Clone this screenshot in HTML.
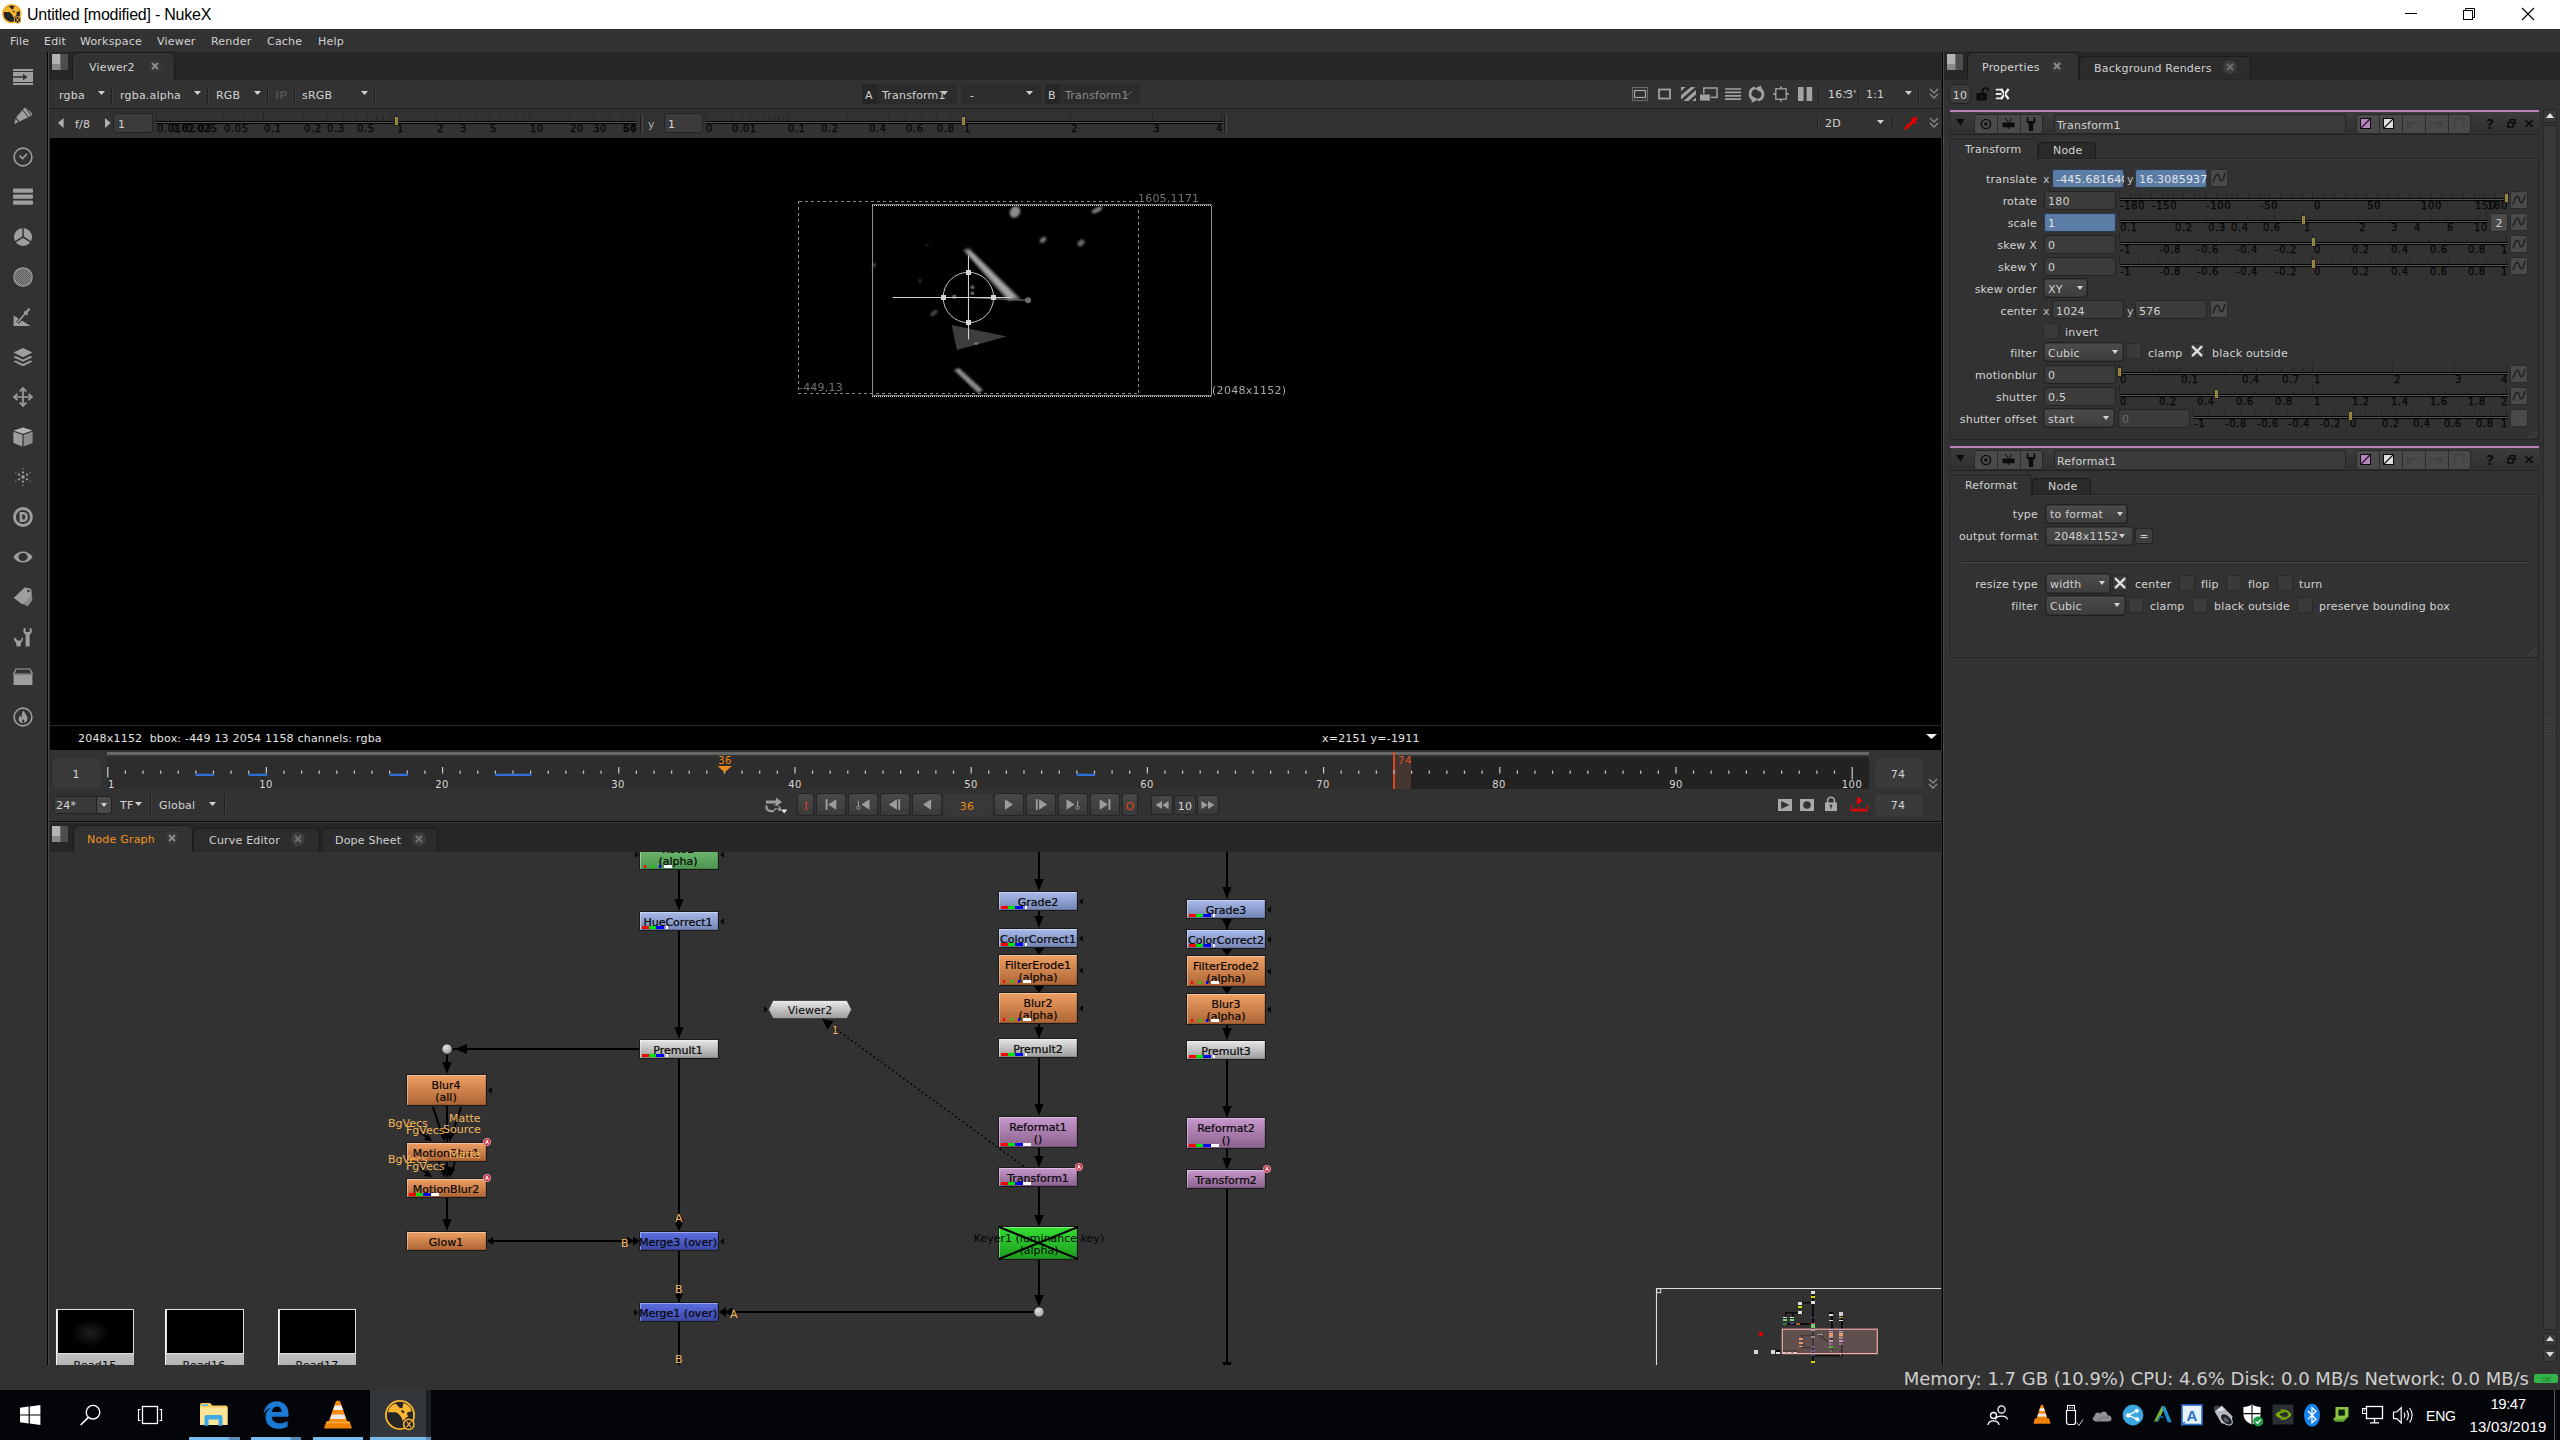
<!DOCTYPE html>
<html><head><meta charset="utf-8"><title>Untitled [modified] - NukeX</title>
<style>
html,body{margin:0;padding:0;background:#323232;overflow:hidden}
#app{position:relative;width:2560px;height:1440px;overflow:hidden;background:#323232;font-family:'DejaVu Sans','Liberation Sans',sans-serif}
#app div,#app span,#app svg{position:absolute}
#app svg{overflow:visible}
.t{font-family:'DejaVu Sans','Liberation Sans',sans-serif;line-height:30px;white-space:pre}
.w{font-family:'Liberation Sans',sans-serif;line-height:30px;white-space:pre}
</style></head><body><div id="app">
<div style="left:0px;top:0px;width:2560px;height:29px;background:#ffffff;"></div>
<svg style="left:2.2px;top:4.25px;" width="19.6" height="19.6" viewBox="0 0 19.6 19.6"><circle cx="9.8" cy="9.8" r="9.02" fill="#262626" stroke="#fcb731" stroke-width="1.57"/><path d="M1.86,7.94 A7.74,7.74 0 0 1 6.86,2.21 C8.04,2.74 8.43,4.70 9.60,5.00 C10.58,5.39 11.27,5.49 11.47,4.90 L12.05,1.96 A7.74,7.74 0 0 1 17.54,7.35 L14.60,7.99 Q13.92,9.31 14.99,10.78 L11.27,13.72 Q11.47,11.96 8.97,9.21 Q8.23,8.23 7.15,7.94 Z" fill="#fcb731"/><ellipse cx="11.66" cy="7.55" rx="1.27" ry="0.73" transform="rotate(40 11.66 7.55)" fill="#262626"/><circle cx="15.53" cy="15.88" r="3.36" fill="#262626" stroke="#fcb731" stroke-width="0.99"/><path d="M14.16,14.04 L16.91,17.71 M16.91,14.04 L14.16,17.71" stroke="#fcb731" stroke-width="0.90" fill="none"/></svg>
<span class="w" style="top:0px;font-size:16px;color:#000;letter-spacing:-0.23px;left:27px;">Untitled [modified] - NukeX</span>
<svg style="left:2400px;top:0px;" width="160" height="29" viewBox="0 0 160 29"><path d="M5,13.5 H17" stroke="#000" stroke-width="1" fill="none"/><path d="M65.5,10.5 V8.5 H74.5 V17.5 H72.5" stroke="#000" stroke-width="1" fill="none"/><rect x="63.5" y="10.5" width="9" height="9" stroke="#000" stroke-width="1" fill="none"/><path d="M122,8 L134,20 M134,8 L122,20" stroke="#000" stroke-width="1.1" fill="none"/></svg>
<div style="left:0px;top:29px;width:2560px;height:22px;background:#323232;"></div>
<div style="left:0px;top:29px;width:2560px;height:1px;background:#2b2b2b;"></div>
<span class="t" style="top:27px;font-size:11px;color:#d2d2d2;letter-spacing:0.2px;left:10px;">File</span>
<span class="t" style="top:27px;font-size:11px;color:#d2d2d2;letter-spacing:0.2px;left:44px;">Edit</span>
<span class="t" style="top:27px;font-size:11px;color:#d2d2d2;letter-spacing:0.2px;left:80px;">Workspace</span>
<span class="t" style="top:27px;font-size:11px;color:#d2d2d2;letter-spacing:0.2px;left:157px;">Viewer</span>
<span class="t" style="top:27px;font-size:11px;color:#d2d2d2;letter-spacing:0.2px;left:211px;">Render</span>
<span class="t" style="top:27px;font-size:11px;color:#d2d2d2;letter-spacing:0.2px;left:267px;">Cache</span>
<span class="t" style="top:27px;font-size:11px;color:#d2d2d2;letter-spacing:0.2px;left:318px;">Help</span>
<div style="left:0px;top:51px;width:47px;height:1314px;background:#323232;"></div>
<div style="left:47px;top:52px;width:1px;height:1313px;background:#000;"></div>
<div style="left:48px;top:52px;width:1px;height:1313px;background:#484848;"></div>
<div style="left:49px;top:52px;width:1px;height:1313px;background:#323232;"></div>
<div style="left:0px;top:50px;width:2560px;height:1px;background:#353535;"></div>
<div style="left:0px;top:51px;width:2560px;height:1px;background:#2e2e2e;"></div>
<svg style="left:13px;top:67px;" width="20" height="20" viewBox="0 0 20 20"><rect x="0" y="2" width="20" height="2" fill="#9e9e9e"/><rect x="0" y="5" width="20" height="10" fill="#9e9e9e"/><rect x="0" y="16" width="20" height="2" fill="#9e9e9e"/><path d="M0,9.2 H10 V6.8 L14.6,10 L10,13.2 V10.8 H0 Z" fill="#323232"/></svg>
<svg style="left:13px;top:107px;" width="20" height="20" viewBox="0 0 20 20"><path d="M11.5,0.8 C15,1.6 18.2,4.6 19.4,8.2 L6.4,14.4 L3.2,10.2 Z" fill="#9e9e9e"/><path d="M2.6,11.4 L5.4,15 L1.2,17.2 Z" fill="#9e9e9e"/><path d="M9.4,2.6 L15.6,10.2 M13.4,1.4 L18.2,8.6" stroke="#323232" stroke-width="1"/></svg>
<svg style="left:13px;top:147px;" width="20" height="20" viewBox="0 0 20 20"><circle cx="10" cy="10" r="8.9" stroke="#9e9e9e" stroke-width="1.6" fill="none"/><path d="M6.6,8.6 L9.6,11.6 L14,6.8" stroke="#9e9e9e" stroke-width="1.6" fill="none"/></svg>
<svg style="left:13px;top:187px;" width="20" height="20" viewBox="0 0 20 20"><rect x="0" y="1.6" width="20" height="4.2" rx="1" fill="#9e9e9e"/><rect x="0" y="7.6" width="20" height="4.2" rx="1" fill="#9e9e9e"/><rect x="0" y="13.6" width="20" height="4.2" rx="1" fill="#9e9e9e"/></svg>
<svg style="left:13px;top:227px;" width="20" height="20" viewBox="0 0 20 20"><circle cx="10" cy="10" r="9" fill="#9e9e9e"/><path d="M10,0 V10 L1.4,15.4 M10,10 L18.6,15.4" stroke="#323232" stroke-width="1.5" fill="none"/></svg>
<svg style="left:13px;top:267px;" width="20" height="20" viewBox="0 0 20 20"><defs><pattern id="dots" width="2" height="2" patternUnits="userSpaceOnUse"><rect width="2" height="2" fill="#8a8a8a"/><rect width="1" height="1" fill="#5c5c5c"/><rect x="1" y="1" width="1" height="1" fill="#5c5c5c"/></pattern></defs><circle cx="10" cy="10" r="9.2" fill="url(#dots)" stroke="#9e9e9e" stroke-width="1.2"/></svg>
<svg style="left:13px;top:307px;" width="20" height="20" viewBox="0 0 20 20"><path d="M0.6,8.6 V19 H17.6 Z" fill="#9e9e9e"/><path d="M4.4,15.8 L13,5.6" stroke="#323232" stroke-width="3.4"/><path d="M4.6,15.6 L12.6,6" stroke="#9e9e9e" stroke-width="1.5"/><path d="M11.2,4.6 L14.6,7.6 M12.6,6.2 L16.4,1.6" stroke="#9e9e9e" stroke-width="2.2"/></svg>
<svg style="left:13px;top:347px;" width="20" height="20" viewBox="0 0 20 20"><path d="M10,1 L19.6,5.6 L10,10.2 L0.4,5.6 Z" fill="#9e9e9e"/><path d="M2.6,9 L10,12.6 L17.4,9 L19.6,10.2 L10,14.8 L0.4,10.2 Z" fill="#9e9e9e"/><path d="M2.6,13.4 L10,17 L17.4,13.4 L19.6,14.6 L10,19.2 L0.4,14.6 Z" fill="#9e9e9e"/></svg>
<svg style="left:13px;top:387px;" width="20" height="20" viewBox="0 0 20 20"><path d="M10,1.2 V18.8 M1.2,10 H18.8" stroke="#9e9e9e" stroke-width="1.7" fill="none"/><path d="M6.8,4.6 L10,1 L13.2,4.6 M6.8,15.4 L10,19 L13.2,15.4 M4.6,6.8 L1,10 L4.6,13.2 M15.4,6.8 L19,10 L15.4,13.2" stroke="#9e9e9e" stroke-width="1.7" fill="none" stroke-linejoin="miter"/></svg>
<svg style="left:13px;top:427px;" width="20" height="20" viewBox="0 0 20 20"><path d="M10,0.6 L19.6,3.6 L10,6.8 L0.4,3.6 Z" fill="#b4b4b4"/><path d="M0.4,4.8 L9.4,7.8 V19.6 L0.4,16 Z" fill="#9e9e9e"/><path d="M19.6,4.8 L10.6,7.8 V19.6 L19.6,16 Z" fill="#8c8c8c"/></svg>
<svg style="left:13px;top:467px;" width="20" height="20" viewBox="0 0 20 20"><circle cx="10" cy="10" r="1.8" fill="#9e9e9e"/><g fill="#9e9e9e"><circle cx="10" cy="5.4" r="1.1"/><circle cx="10" cy="14.6" r="1.1"/><circle cx="6" cy="7.7" r="1.1"/><circle cx="14" cy="7.7" r="1.1"/><circle cx="6" cy="12.3" r="1.1"/><circle cx="14" cy="12.3" r="1.1"/></g><g fill="#7a7a7a"><circle cx="10" cy="1.6" r="0.8"/><circle cx="10" cy="18.4" r="0.8"/><circle cx="2.8" cy="5.8" r="0.8"/><circle cx="17.2" cy="5.8" r="0.8"/><circle cx="2.8" cy="14.2" r="0.8"/><circle cx="17.2" cy="14.2" r="0.8"/></g></svg>
<svg style="left:13px;top:507px;" width="20" height="20" viewBox="0 0 20 20"><circle cx="10" cy="10" r="8.5" stroke="#9e9e9e" stroke-width="2.8" fill="none"/><path d="M6.6,5 H10.4 C16.4,5 16.4,15 10.4,15 H6.6 Z M9.2,7.4 V12.6 H10.4 C13,12.6 13,7.4 10.4,7.4 Z" fill="#9e9e9e" fill-rule="evenodd"/></svg>
<svg style="left:13px;top:547px;" width="20" height="20" viewBox="0 0 20 20"><path d="M0.4,10 C5,2.6 15,2.6 19.6,10 C15,17.4 5,17.4 0.4,10 Z" fill="#9e9e9e"/><ellipse cx="10" cy="10" rx="4.6" ry="4" fill="#323232"/></svg>
<svg style="left:13px;top:587px;" width="20" height="20" viewBox="0 0 20 20"><path d="M13.6,1.4 L18.4,2.2 L19.4,13 L14.6,19.6 L5.4,14 Z" fill="#8a8a8a"/><path d="M11.6,0.6 L17.4,1.6 L18,8 L9.6,17.6 L0.6,11 Z" fill="#9e9e9e"/><circle cx="15.4" cy="4" r="1.3" fill="#323232"/></svg>
<svg style="left:13px;top:627px;" width="20" height="20" viewBox="0 0 20 20"><path d="M11,1 C9.6,3.6 10.4,6.4 12.6,7.8 V19.4 H16.6 V7.8 C18.8,6.4 19.6,3.6 18.2,1 L16.6,1.2 V5 H12.6 V1.2 Z" fill="#9e9e9e"/><path d="M1,10.6 C0.4,12.6 1.4,14.6 3,15.4 L3.6,19.4 H7.4 L8,15.4 C9.6,14.6 10.4,12.6 9.8,10.6 L8.4,11 V13.4 H4.6 L2.4,11 Z" fill="#9e9e9e"/></svg>
<svg style="left:13px;top:667px;" width="20" height="20" viewBox="0 0 20 20"><path d="M3,2 H17 L19.4,7 H0.6 Z" fill="none" stroke="#9e9e9e" stroke-width="1.2"/><rect x="0.6" y="7.6" width="18.8" height="10.4" fill="#9e9e9e"/></svg>
<svg style="left:13px;top:707px;" width="20" height="20" viewBox="0 0 20 20"><circle cx="10" cy="10" r="8.9" stroke="#9e9e9e" stroke-width="1.6" fill="none"/><path d="M10.4,3.4 C12,6 14.4,8.4 14.4,11.6 C14.4,14.4 12.6,16.2 10,16.2 C7.4,16.2 5.6,14.4 5.6,12 C5.6,10.4 6.4,9.2 7.4,8.2 C7.4,9.6 8,10.4 8.8,10.8 C8.4,8.2 9,5.4 10.4,3.4 Z" fill="#9e9e9e"/><path d="M10,16 C8.6,15 8.8,13.2 10.2,12 C10.6,13 11.6,13.6 11.4,15 Z" fill="#323232"/></svg>
<div style="left:49px;top:52px;width:1892px;height:28px;background:#262626;"></div>
<div style="left:52px;top:54px;width:16px;height:16px;background:#4e4e4e;"></div>
<div style="left:52px;top:54px;width:8px;height:10px;background:#b2b2b2;"></div>
<div style="left:52px;top:64px;width:8px;height:6px;background:#888888;"></div>
<div style="left:60px;top:54px;width:1px;height:16px;background:#6e6e6e;"></div>
<div style="left:72px;top:52px;width:103px;height:28px;background:#323232;border-radius:5px 5px 0 0;box-shadow:inset 1px 1px 0 #1c1c1c, inset -1px 0 0 #1c1c1c;"></div>
<span class="t" style="top:53px;font-size:11px;color:#d2d2d2;letter-spacing:0.2px;left:89px;">Viewer2</span>
<svg style="left:147px;top:58px;" width="16" height="16" viewBox="0 0 16 16"><circle cx="8" cy="8" r="7" fill="#383838"/><path d="M5,5 L11,11 M11,5 L5,11" stroke="#8a8a8a" stroke-width="2" fill="none"/></svg>
<div style="left:50px;top:80px;width:1891px;height:58px;background:#323232;"></div>
<div style="left:50px;top:108px;width:1891px;height:1px;background:#1e1e1e;"></div>
<span class="t" style="top:81px;font-size:11px;color:#d2d2d2;letter-spacing:0.2px;left:59px;">rgba</span>
<svg style="left:98px;top:91px;" width="7" height="4" viewBox="0 0 7 4"><path d="M0,0 H7 L3.5,4 Z" fill="#d2d2d2"/></svg>
<div style="left:111px;top:87px;width:1px;height:15px;background:#1e1e1e;"></div>
<div style="left:112px;top:87px;width:1px;height:15px;background:#3e3e3e;"></div>
<span class="t" style="top:81px;font-size:11px;color:#d2d2d2;letter-spacing:0.2px;left:120px;">rgba.alpha</span>
<svg style="left:194px;top:91px;" width="7" height="4" viewBox="0 0 7 4"><path d="M0,0 H7 L3.5,4 Z" fill="#d2d2d2"/></svg>
<div style="left:207px;top:87px;width:1px;height:15px;background:#1e1e1e;"></div>
<div style="left:208px;top:87px;width:1px;height:15px;background:#3e3e3e;"></div>
<span class="t" style="top:81px;font-size:11px;color:#d2d2d2;letter-spacing:0.2px;left:216px;">RGB</span>
<svg style="left:254px;top:91px;" width="7" height="4" viewBox="0 0 7 4"><path d="M0,0 H7 L3.5,4 Z" fill="#d2d2d2"/></svg>
<div style="left:267px;top:87px;width:1px;height:15px;background:#1e1e1e;"></div>
<div style="left:268px;top:87px;width:1px;height:15px;background:#3e3e3e;"></div>
<span class="t" style="top:81px;font-size:11px;color:#505050;letter-spacing:0.2px;font-weight:bold;left:275px;">IP</span>
<div style="left:294px;top:87px;width:1px;height:15px;background:#1e1e1e;"></div>
<div style="left:295px;top:87px;width:1px;height:15px;background:#3e3e3e;"></div>
<span class="t" style="top:81px;font-size:11px;color:#d2d2d2;letter-spacing:0.2px;left:302px;">sRGB</span>
<svg style="left:361px;top:91px;" width="7" height="4" viewBox="0 0 7 4"><path d="M0,0 H7 L3.5,4 Z" fill="#d2d2d2"/></svg>
<div style="left:374px;top:87px;width:1px;height:15px;background:#1e1e1e;"></div>
<div style="left:375px;top:87px;width:1px;height:15px;background:#3e3e3e;"></div>
<div style="left:862px;top:84px;width:15px;height:20px;background:#262626;"></div>
<div style="left:877px;top:84px;width:80px;height:20px;background:#2c2c2c;"></div>
<span class="t" style="top:81px;font-size:11px;color:#d2d2d2;letter-spacing:0.2px;left:865px;">A</span>
<span class="t" style="top:81px;font-size:11px;color:#d2d2d2;letter-spacing:0.2px;left:882px;">Transform1</span>
<svg style="left:941px;top:91px;" width="7" height="4" viewBox="0 0 7 4"><path d="M0,0 H7 L3.5,4 Z" fill="#c8c8c8"/></svg>
<div style="left:961px;top:84px;width:80px;height:20px;background:#2c2c2c;"></div>
<span class="t" style="top:81px;font-size:11px;color:#d2d2d2;letter-spacing:0.2px;left:970px;">-</span>
<svg style="left:1026px;top:91px;" width="7" height="4" viewBox="0 0 7 4"><path d="M0,0 H7 L3.5,4 Z" fill="#d2d2d2"/></svg>
<div style="left:1045px;top:84px;width:15px;height:20px;background:#262626;"></div>
<div style="left:1060px;top:84px;width:80px;height:20px;background:#2c2c2c;"></div>
<span class="t" style="top:81px;font-size:11px;color:#d2d2d2;letter-spacing:0.2px;left:1048px;">B</span>
<span class="t" style="top:81px;font-size:11px;color:#8c8c8c;letter-spacing:0.2px;left:1065px;">Transform1</span>
<svg style="left:1125px;top:91px;" width="7" height="5" viewBox="0 0 7 5"><path d="M0.5,2 L2.5,4.5 L6.5,0.5" stroke="#707070" stroke-width="1" fill="none"/></svg>
<svg style="left:1632px;top:87px;" width="16" height="14" viewBox="0 0 16 14"><rect x="0.5" y="0.5" width="15" height="13" stroke="#6a6a6a" fill="none"/><rect x="2.5" y="3.5" width="11" height="7" stroke="#a2a2a2" stroke-width="1.2" fill="none"/></svg>
<svg style="left:1658px;top:88px;" width="13" height="12" viewBox="0 0 13 12"><rect x="1" y="1.5" width="11" height="9" stroke="#a2a2a2" stroke-width="1.8" fill="none"/></svg>
<svg style="left:1681px;top:87px;" width="15" height="14" viewBox="0 0 15 14"><clipPath id="cpz"><rect width="15" height="14"/></clipPath><g clip-path="url(#cpz)" fill="#a2a2a2"><path d="M0,0 H4.6 L0,4.2 Z"/><path d="M11.2,14 H15 V10.6 Z"/><path d="M0,8.2 L10.2,-0.2 H14.6 L0,12.6 Z"/><path d="M2,14.4 L15,3 V7.4 L7,14.4 Z"/></g></svg>
<svg style="left:1699px;top:87px;" width="19" height="14" viewBox="0 0 19 14"><rect x="4.8" y="1" width="13.2" height="9.4" stroke="#a2a2a2" stroke-width="1.5" fill="none"/><rect x="0.5" y="7" width="10.8" height="7" fill="#a2a2a2" stroke="#323232" stroke-width="1"/></svg>
<svg style="left:1725px;top:88px;" width="16" height="12" viewBox="0 0 16 12"><path d="M0,1 H16 M0,4.4 H16 M0,7.8 H16 M0,11.2 H16" stroke="#a2a2a2" stroke-width="1.7"/></svg>
<svg style="left:1747px;top:85px;" width="19" height="18" viewBox="0 0 19 18"><path d="M8.2,2.8 C2.2,3.8 1.4,11.4 6.2,14.4" stroke="#a2a2a2" stroke-width="2.8" fill="none"/><path d="M5,11 L11.6,14.6 L4.6,17.8 Z" fill="#a2a2a2"/><path d="M10.8,15.2 C16.8,14.2 17.6,6.6 12.8,3.6" stroke="#a2a2a2" stroke-width="2.8" fill="none"/><path d="M14,7.2 L7.4,3.6 L14.4,0.4 Z" fill="#a2a2a2"/></svg>
<svg style="left:1773px;top:86px;" width="16" height="16" viewBox="0 0 16 16"><rect x="2.8" y="2.8" width="10.4" height="10.4" stroke="#a2a2a2" stroke-width="1.3" fill="#2c2c2c"/><path d="M8,0.4 V2.8 M8,13.2 V15.6 M0.4,8 H2.8 M13.2,8 H15.6" stroke="#a2a2a2" stroke-width="1.8"/></svg>
<svg style="left:1798px;top:87px;" width="15" height="14" viewBox="0 0 15 14"><rect x="0" y="0" width="5.6" height="14" fill="#a2a2a2"/><rect x="8.6" y="0" width="5.6" height="14" fill="#a2a2a2"/></svg>
<div style="left:1818px;top:87px;width:1px;height:15px;background:#1e1e1e;"></div>
<div style="left:1819px;top:87px;width:1px;height:15px;background:#3e3e3e;"></div>
<span class="t" style="top:80px;font-size:11px;color:#d2d2d2;letter-spacing:0.2px;left:1828px;">16.3&#x27;</span>
<svg style="left:1843px;top:91px;" width="6" height="3" viewBox="0 0 6 3"><path d="M0,0 H6 L3.0,3 Z" fill="#909090"/></svg>
<div style="left:1858px;top:87px;width:1px;height:15px;background:#1e1e1e;"></div>
<div style="left:1859px;top:87px;width:1px;height:15px;background:#3e3e3e;"></div>
<span class="t" style="top:80px;font-size:11px;color:#d2d2d2;letter-spacing:0.2px;left:1866px;">1:1</span>
<svg style="left:1905px;top:91px;" width="7" height="4" viewBox="0 0 7 4"><path d="M0,0 H7 L3.5,4 Z" fill="#d2d2d2"/></svg>
<div style="left:1918px;top:87px;width:1px;height:15px;background:#1e1e1e;"></div>
<div style="left:1919px;top:87px;width:1px;height:15px;background:#3e3e3e;"></div>
<svg style="left:1929px;top:88px;" width="10" height="12" viewBox="0 0 10 12"><path d="M1,1 L5,5 L9,1 M1,6 L5,10 L9,6" stroke="#8a8a8a" stroke-width="1.3" fill="none"/></svg>
<svg style="left:58px;top:118px;" width="6" height="10" viewBox="0 0 6 10"><path d="M5.6,0 V10 L0,5 Z" fill="#b0b0b0"/></svg>
<span class="t" style="top:110px;font-size:11px;color:#d2d2d2;letter-spacing:0.2px;left:75px;">f/8</span>
<svg style="left:105px;top:118px;" width="6" height="10" viewBox="0 0 6 10"><path d="M0,0 V10 L5.6,5 Z" fill="#b0b0b0"/></svg>
<div style="left:113px;top:113px;width:40px;height:20px;background:#3b3b3b;border-radius:3px;box-shadow:inset 0 0 0 1px #232323;"></div>
<span class="t" style="top:110px;font-size:11px;color:#d2d2d2;letter-spacing:0.2px;left:118px;">1</span>
<svg style="left:156px;top:113px;shape-rendering:crispEdges;" width="482" height="12" viewBox="0 0 482 12"><rect x="14" y="3" width="1" height="5" fill="#242424"/><rect x="38" y="3" width="1" height="5" fill="#242424"/><rect x="54" y="3" width="1" height="5" fill="#242424"/><rect x="67" y="3" width="1" height="5" fill="#242424"/><rect x="78" y="3" width="1" height="5" fill="#242424"/><rect x="87" y="3" width="1" height="5" fill="#242424"/><rect x="94" y="3" width="1" height="5" fill="#242424"/><rect x="101" y="3" width="1" height="5" fill="#242424"/><rect x="147" y="3" width="1" height="5" fill="#242424"/><rect x="171" y="3" width="1" height="5" fill="#242424"/><rect x="187" y="3" width="1" height="5" fill="#242424"/><rect x="200" y="3" width="1" height="5" fill="#242424"/><rect x="211" y="3" width="1" height="5" fill="#242424"/><rect x="220" y="3" width="1" height="5" fill="#242424"/><rect x="227" y="3" width="1" height="5" fill="#242424"/><rect x="234" y="3" width="1" height="5" fill="#242424"/><rect x="280" y="3" width="1" height="5" fill="#242424"/><rect x="304" y="3" width="1" height="5" fill="#242424"/><rect x="320" y="3" width="1" height="5" fill="#242424"/><rect x="333" y="3" width="1" height="5" fill="#242424"/><rect x="344" y="3" width="1" height="5" fill="#242424"/><rect x="353" y="3" width="1" height="5" fill="#242424"/><rect x="360" y="3" width="1" height="5" fill="#242424"/><rect x="367" y="3" width="1" height="5" fill="#242424"/><rect x="413" y="3" width="1" height="5" fill="#242424"/><rect x="437" y="3" width="1" height="5" fill="#242424"/><rect x="453" y="3" width="1" height="5" fill="#242424"/><rect x="466" y="3" width="1" height="5" fill="#242424"/><rect x="477" y="3" width="1" height="5" fill="#242424"/><rect x="0" y="0" width="1" height="8" fill="#242424"/><rect x="107" y="0" width="1" height="8" fill="#242424"/><rect x="240" y="0" width="1" height="8" fill="#242424"/><rect x="373" y="0" width="1" height="8" fill="#242424"/><rect x="0" y="8" width="481" height="1" fill="#050505"/><rect x="0" y="9" width="481" height="1" fill="#555"/><rect x="0" y="10" width="481" height="1" fill="#050505"/></svg>
<span class="t" style="top:114px;font-size:10px;color:#080808;letter-spacing:0.65px;left:157px;-webkit-text-stroke:0.3px #080808;">0.016</span>
<span class="t" style="top:114px;font-size:10px;color:#080808;letter-spacing:0.65px;left:171px;-webkit-text-stroke:0.3px #080808;">0.02</span>
<span class="t" style="top:114px;font-size:10px;color:#080808;letter-spacing:0.65px;left:186px;-webkit-text-stroke:0.3px #080808;">0.025</span>
<span class="t" style="top:114px;font-size:10px;color:#080808;letter-spacing:0.65px;left:198px;-webkit-text-stroke:0.3px #080808;">03</span>
<span class="t" style="top:114px;font-size:10px;color:#080808;letter-spacing:0.65px;left:224px;-webkit-text-stroke:0.3px #080808;">0.05</span>
<span class="t" style="top:114px;font-size:10px;color:#080808;letter-spacing:0.65px;left:264px;-webkit-text-stroke:0.3px #080808;">0.1</span>
<span class="t" style="top:114px;font-size:10px;color:#080808;letter-spacing:0.65px;left:304px;-webkit-text-stroke:0.3px #080808;">0.2</span>
<span class="t" style="top:114px;font-size:10px;color:#080808;letter-spacing:0.65px;left:327px;-webkit-text-stroke:0.3px #080808;">0.3</span>
<span class="t" style="top:114px;font-size:10px;color:#080808;letter-spacing:0.65px;left:357px;-webkit-text-stroke:0.3px #080808;">0.5</span>
<span class="t" style="top:114px;font-size:10px;color:#080808;letter-spacing:0.65px;left:397px;-webkit-text-stroke:0.3px #080808;">1</span>
<span class="t" style="top:114px;font-size:10px;color:#080808;letter-spacing:0.65px;left:437px;-webkit-text-stroke:0.3px #080808;">2</span>
<span class="t" style="top:114px;font-size:10px;color:#080808;letter-spacing:0.65px;left:460px;-webkit-text-stroke:0.3px #080808;">3</span>
<span class="t" style="top:114px;font-size:10px;color:#080808;letter-spacing:0.65px;left:490px;-webkit-text-stroke:0.3px #080808;">5</span>
<span class="t" style="top:114px;font-size:10px;color:#080808;letter-spacing:0.65px;left:530px;-webkit-text-stroke:0.3px #080808;">10</span>
<span class="t" style="top:114px;font-size:10px;color:#080808;letter-spacing:0.65px;left:570px;-webkit-text-stroke:0.3px #080808;">20</span>
<span class="t" style="top:114px;font-size:10px;color:#080808;letter-spacing:0.65px;left:593px;-webkit-text-stroke:0.3px #080808;">30</span>
<span class="t" style="top:114px;font-size:10px;color:#080808;letter-spacing:0.65px;left:623px;-webkit-text-stroke:0.3px #080808;">50</span>
<span class="t" style="top:114px;font-size:10px;color:#080808;letter-spacing:0.65px;right:1923px;-webkit-text-stroke:0.3px #080808;">64</span>
<div style="left:394px;top:116px;width:5px;height:10px;background:#262626;border-radius:1px;"></div>
<div style="left:395px;top:117px;width:3px;height:8px;background:#a08a42;"></div>
<div style="left:396px;top:117px;width:1px;height:8px;background:#8e7a3a;"></div>
<div style="left:640px;top:114px;width:1px;height:20px;background:#1e1e1e;"></div>
<div style="left:642px;top:114px;width:1px;height:20px;background:#4a4a4a;"></div>
<span class="t" style="top:110px;font-size:11px;color:#b0b0b0;letter-spacing:0.2px;left:648px;">y</span>
<div style="left:664px;top:113px;width:39px;height:20px;background:#3b3b3b;border-radius:3px;box-shadow:inset 0 0 0 1px #232323;"></div>
<span class="t" style="top:110px;font-size:11px;color:#d2d2d2;letter-spacing:0.2px;left:668px;">1</span>
<svg style="left:706px;top:113px;shape-rendering:crispEdges;" width="518" height="12" viewBox="0 0 518 12"><rect x="25" y="3" width="1" height="5" fill="#242424"/><rect x="36" y="3" width="1" height="5" fill="#242424"/><rect x="44" y="3" width="1" height="5" fill="#242424"/><rect x="51" y="3" width="1" height="5" fill="#242424"/><rect x="57" y="3" width="1" height="5" fill="#242424"/><rect x="63" y="3" width="1" height="5" fill="#242424"/><rect x="68" y="3" width="1" height="5" fill="#242424"/><rect x="72" y="3" width="1" height="5" fill="#242424"/><rect x="77" y="3" width="1" height="5" fill="#242424"/><rect x="115" y="3" width="1" height="5" fill="#242424"/><rect x="141" y="3" width="1" height="5" fill="#242424"/><rect x="163" y="3" width="1" height="5" fill="#242424"/><rect x="182" y="3" width="1" height="5" fill="#242424"/><rect x="199" y="3" width="1" height="5" fill="#242424"/><rect x="215" y="3" width="1" height="5" fill="#242424"/><rect x="230" y="3" width="1" height="5" fill="#242424"/><rect x="244" y="3" width="1" height="5" fill="#242424"/><rect x="-1" y="0" width="1" height="8" fill="#242424"/><rect x="81" y="0" width="1" height="8" fill="#242424"/><rect x="257" y="0" width="1" height="8" fill="#242424"/><rect x="364" y="0" width="1" height="8" fill="#242424"/><rect x="446" y="0" width="1" height="8" fill="#242424"/><rect x="515" y="0" width="1" height="8" fill="#242424"/><rect x="0" y="8" width="517" height="1" fill="#050505"/><rect x="0" y="9" width="517" height="1" fill="#555"/><rect x="0" y="10" width="517" height="1" fill="#050505"/></svg>
<span class="t" style="top:114px;font-size:10px;color:#080808;letter-spacing:0.65px;left:706px;-webkit-text-stroke:0.3px #080808;">0</span>
<span class="t" style="top:114px;font-size:10px;color:#080808;letter-spacing:0.65px;left:732px;-webkit-text-stroke:0.3px #080808;">0.01</span>
<span class="t" style="top:114px;font-size:10px;color:#080808;letter-spacing:0.65px;left:788px;-webkit-text-stroke:0.3px #080808;">0.1</span>
<span class="t" style="top:114px;font-size:10px;color:#080808;letter-spacing:0.65px;left:821px;-webkit-text-stroke:0.3px #080808;">0.2</span>
<span class="t" style="top:114px;font-size:10px;color:#080808;letter-spacing:0.65px;left:869px;-webkit-text-stroke:0.3px #080808;">0.4</span>
<span class="t" style="top:114px;font-size:10px;color:#080808;letter-spacing:0.65px;left:906px;-webkit-text-stroke:0.3px #080808;">0.6</span>
<span class="t" style="top:114px;font-size:10px;color:#080808;letter-spacing:0.65px;left:937px;-webkit-text-stroke:0.3px #080808;">0.8</span>
<span class="t" style="top:114px;font-size:10px;color:#080808;letter-spacing:0.65px;left:964px;-webkit-text-stroke:0.3px #080808;">1</span>
<span class="t" style="top:114px;font-size:10px;color:#080808;letter-spacing:0.65px;left:1071px;-webkit-text-stroke:0.3px #080808;">2</span>
<span class="t" style="top:114px;font-size:10px;color:#080808;letter-spacing:0.65px;left:1153px;-webkit-text-stroke:0.3px #080808;">3</span>
<span class="t" style="top:114px;font-size:10px;color:#080808;letter-spacing:0.65px;right:1337px;-webkit-text-stroke:0.3px #080808;">4</span>
<div style="left:961px;top:116px;width:5px;height:10px;background:#262626;border-radius:1px;"></div>
<div style="left:962px;top:117px;width:3px;height:8px;background:#a08a42;"></div>
<div style="left:963px;top:117px;width:1px;height:8px;background:#8e7a3a;"></div>
<div style="left:1224px;top:114px;width:1px;height:20px;background:#1e1e1e;"></div>
<div style="left:1226px;top:114px;width:1px;height:20px;background:#4a4a4a;"></div>
<div style="left:1817px;top:116px;width:1px;height:15px;background:#1e1e1e;"></div>
<div style="left:1818px;top:116px;width:1px;height:15px;background:#3e3e3e;"></div>
<span class="t" style="top:109px;font-size:11px;color:#d2d2d2;letter-spacing:0.2px;left:1825px;">2D</span>
<svg style="left:1877px;top:120px;" width="7" height="4" viewBox="0 0 7 4"><path d="M0,0 H7 L3.5,4 Z" fill="#d2d2d2"/></svg>
<div style="left:1892px;top:116px;width:1px;height:15px;background:#1e1e1e;"></div>
<div style="left:1893px;top:116px;width:1px;height:15px;background:#3e3e3e;"></div>
<svg style="left:1903px;top:115px;" width="16" height="16" viewBox="0 0 16 16"><path d="M1,15 L2.4,11.6 L9.6,5 L11.6,7 L4.6,13.8 Z" fill="#e00000"/><path d="M8.6,3.4 L13,8 M10.4,5.6 L13.6,2.2" stroke="#e00000" stroke-width="3"/></svg>
<svg style="left:1929px;top:117px;" width="10" height="12" viewBox="0 0 10 12"><path d="M1,1 L5,5 L9,1 M1,6 L5,10 L9,6" stroke="#8a8a8a" stroke-width="1.3" fill="none"/></svg>
<div style="left:50px;top:138px;width:1891px;height:587px;background:#000;"></div>
<div style="left:50px;top:725px;width:1891px;height:1px;background:#2a2a2a;"></div>
<div style="left:50px;top:726px;width:1891px;height:24px;background:#000;"></div>
<span class="t" style="top:724px;font-size:11px;color:#e4e4e4;letter-spacing:0.2px;left:78px;">2048x1152  bbox: -449 13 2054 1158 channels: rgba</span>
<span class="t" style="top:724px;font-size:11px;color:#e4e4e4;letter-spacing:0.2px;left:1322px;">x=2151 y=-1911</span>
<svg style="left:1926px;top:734px;" width="11" height="5" viewBox="0 0 11 5"><path d="M0,0 H11 L5.5,5 Z" fill="#f0f0f0"/></svg>
<svg style="left:800px;top:200px;" width="420" height="200" viewBox="0 0 420 200"><defs><filter id="b1" x="-50%" y="-50%" width="200%" height="200%"><feGaussianBlur stdDeviation="1.1"/></filter><filter id="b2" x="-50%" y="-50%" width="200%" height="200%"><feGaussianBlur stdDeviation="0.7"/></filter><linearGradient id="shard" x1="0" y1="0" x2="1" y2="0"><stop offset="0" stop-color="#9a9a9a"/><stop offset="1" stop-color="#505050"/></linearGradient></defs><g filter="url(#b1)"><path d="M163,50 L169,48 L221,99 L208,101 Z" fill="#6a6a6a"/><path d="M166,52 L170,51 L216,97 L210,99 Z" fill="#a4a4a4"/><ellipse cx="215" cy="12" rx="5" ry="6" fill="#8c8c8c" transform="rotate(30 215 12)"/><ellipse cx="297" cy="10" rx="6" ry="2.4" fill="#7c7c7c" transform="rotate(-28 297 10)"/><ellipse cx="243" cy="40" rx="3.6" ry="2.4" fill="#7a7a7a" transform="rotate(-40 243 40)"/><ellipse cx="281" cy="43" rx="4" ry="2.8" fill="#6a6a6a" transform="rotate(-45 281 43)"/><path d="M154,170 L159,168 L183,190 L178,193 Z" fill="#8a8a8a"/><ellipse cx="134" cy="113" rx="4.4" ry="2" fill="#4c4c4c" transform="rotate(-40 134 113)"/><ellipse cx="120" cy="81" rx="1.2" ry="2" fill="#484848"/><ellipse cx="74" cy="65" rx="1.5" ry="2.5" fill="#5a5a5a"/><ellipse cx="127" cy="45" rx="2" ry="0.8" fill="#3a3a3a" transform="rotate(-30 127 45)"/></g><g filter="url(#b2)"><path d="M151.5,125 L207,136.5 L157,150 Z" fill="#3c3c3a"/><ellipse cx="176" cy="143.5" rx="2.2" ry="1.4" fill="#707070"/></g></svg>
<svg style="left:800px;top:200px;shape-rendering:crispEdges;" width="420" height="200" viewBox="0 0 420 200"><path d="M72.5,5.5 V195.5 M411.5,5.5 V195.5" stroke="#8e8e8e" stroke-width="1" fill="none"/><path d="M72,5 H412 M72,196 H412" stroke="#d8d8d8" stroke-width="1.4" stroke-dasharray="1 1" fill="none"/><path d="M72,4.5 H412 M72,195.5 H412" stroke="#7a7a7a" stroke-width="1" fill="none"/><path d="M-1.5,1.5 H338.5 V193.5 H-1.5 Z" stroke="#8a8a8a" stroke-width="1" stroke-dasharray="3 3" fill="none"/></svg>
<span class="t" style="top:184px;font-size:11px;color:#727272;letter-spacing:0.2px;left:1138px;">1605,1171</span>
<span class="t" style="top:373px;font-size:11px;color:#727272;letter-spacing:0.2px;left:799px;">-449,13</span>
<span class="t" style="top:376px;font-size:11px;color:#a6a6a6;letter-spacing:0.3px;left:1212px;">(2048x1152)</span>
<svg style="left:800px;top:200px;" width="420" height="200" viewBox="0 0 420 200"><line x1="168.3" y1="97.4" x2="227.8" y2="100.3" stroke="#6a6a6a" stroke-width="1.2"/><circle cx="228" cy="100.3" r="3" fill="#6a6a6a"/><circle cx="172.5" cy="87.3" r="2" fill="#5a5a5a"/><circle cx="172.4" cy="93.3" r="2" fill="#5a5a5a"/><circle cx="154.3" cy="96.8" r="2.2" fill="#5a5a5a"/><circle cx="168.4" cy="97.5" r="25.2" stroke="#c4c4c4" stroke-width="1" fill="none"/><path d="M92.7,97.5 H210.5 M168.5,55.6 V139.5" stroke="#d2d2d2" stroke-width="1.1"/><g fill="#d6d6d6"><rect x="166" y="70" width="5" height="5"/><rect x="166" y="120" width="5" height="5"/><rect x="141" y="95" width="5" height="5"/><rect x="191" y="95" width="5" height="5"/></g></svg>
<div style="left:50px;top:750px;width:1891px;height:72px;background:#323232;"></div>
<div style="left:107px;top:752px;width:1762px;height:3px;background:#666666;"></div>
<div style="left:107px;top:757px;width:1762px;height:32px;background:#2d2d2d;"></div>
<div style="left:1394px;top:757px;width:475px;height:32px;background:#222222;"></div>
<div style="left:1394px;top:757px;width:17px;height:32px;background:#453631;"></div>
<div style="left:1393px;top:752px;width:2px;height:37px;background:#d6481f;"></div>
<span class="t" style="top:746px;font-size:10px;color:#d8502c;letter-spacing:1.0px;left:1398px;">74</span>
<div style="left:53px;top:758px;width:48px;height:30px;background:#3a3a3a;border-radius:3px;box-shadow:inset 0 0 0 1px #383838;"></div>
<span class="t" style="top:760px;font-size:11px;color:#d2d2d2;letter-spacing:0.2px;left:-224px;width:600px;text-align:center;">1</span>
<svg style="left:107px;top:757px;" width="1762" height="32" viewBox="0 0 1762 32"><rect x="0.20" y="10" width="1.2" height="10.4" fill="#cacaca"/><rect x="17.72" y="13.6" width="1.3" height="3.2" fill="#c0c0c0"/><rect x="35.34" y="13.6" width="1.3" height="3.2" fill="#c0c0c0"/><rect x="52.96" y="13.6" width="1.3" height="3.2" fill="#c0c0c0"/><rect x="70.58" y="13.6" width="1.3" height="3.2" fill="#c0c0c0"/><rect x="88.20" y="13.6" width="1.3" height="3.2" fill="#c0c0c0"/><rect x="105.82" y="13.6" width="1.3" height="3.2" fill="#c0c0c0"/><rect x="123.44" y="13.6" width="1.3" height="3.2" fill="#c0c0c0"/><rect x="141.06" y="13.6" width="1.3" height="3.2" fill="#c0c0c0"/><rect x="158.78" y="10" width="1.2" height="6.6" fill="#cacaca"/><rect x="176.30" y="13.6" width="1.3" height="3.2" fill="#c0c0c0"/><rect x="193.92" y="13.6" width="1.3" height="3.2" fill="#c0c0c0"/><rect x="211.54" y="13.6" width="1.3" height="3.2" fill="#c0c0c0"/><rect x="229.16" y="13.6" width="1.3" height="3.2" fill="#c0c0c0"/><rect x="246.78" y="13.6" width="1.3" height="3.2" fill="#c0c0c0"/><rect x="264.40" y="13.6" width="1.3" height="3.2" fill="#c0c0c0"/><rect x="282.02" y="13.6" width="1.3" height="3.2" fill="#c0c0c0"/><rect x="299.64" y="13.6" width="1.3" height="3.2" fill="#c0c0c0"/><rect x="317.26" y="13.6" width="1.3" height="3.2" fill="#c0c0c0"/><rect x="334.98" y="10" width="1.2" height="6.6" fill="#cacaca"/><rect x="352.50" y="13.6" width="1.3" height="3.2" fill="#c0c0c0"/><rect x="370.12" y="13.6" width="1.3" height="3.2" fill="#c0c0c0"/><rect x="387.74" y="13.6" width="1.3" height="3.2" fill="#c0c0c0"/><rect x="405.36" y="13.6" width="1.3" height="3.2" fill="#c0c0c0"/><rect x="422.98" y="13.6" width="1.3" height="3.2" fill="#c0c0c0"/><rect x="440.60" y="13.6" width="1.3" height="3.2" fill="#c0c0c0"/><rect x="458.22" y="13.6" width="1.3" height="3.2" fill="#c0c0c0"/><rect x="475.84" y="13.6" width="1.3" height="3.2" fill="#c0c0c0"/><rect x="493.46" y="13.6" width="1.3" height="3.2" fill="#c0c0c0"/><rect x="511.18" y="10" width="1.2" height="6.6" fill="#cacaca"/><rect x="528.70" y="13.6" width="1.3" height="3.2" fill="#c0c0c0"/><rect x="546.32" y="13.6" width="1.3" height="3.2" fill="#c0c0c0"/><rect x="563.94" y="13.6" width="1.3" height="3.2" fill="#c0c0c0"/><rect x="581.56" y="13.6" width="1.3" height="3.2" fill="#c0c0c0"/><rect x="599.18" y="13.6" width="1.3" height="3.2" fill="#c0c0c0"/><rect x="616.80" y="13.6" width="1.3" height="3.2" fill="#c0c0c0"/><rect x="634.42" y="13.6" width="1.3" height="3.2" fill="#c0c0c0"/><rect x="652.04" y="13.6" width="1.3" height="3.2" fill="#c0c0c0"/><rect x="669.66" y="13.6" width="1.3" height="3.2" fill="#c0c0c0"/><rect x="687.38" y="10" width="1.2" height="6.6" fill="#cacaca"/><rect x="704.90" y="13.6" width="1.3" height="3.2" fill="#c0c0c0"/><rect x="722.52" y="13.6" width="1.3" height="3.2" fill="#c0c0c0"/><rect x="740.14" y="13.6" width="1.3" height="3.2" fill="#c0c0c0"/><rect x="757.76" y="13.6" width="1.3" height="3.2" fill="#c0c0c0"/><rect x="775.38" y="13.6" width="1.3" height="3.2" fill="#c0c0c0"/><rect x="793.00" y="13.6" width="1.3" height="3.2" fill="#c0c0c0"/><rect x="810.62" y="13.6" width="1.3" height="3.2" fill="#c0c0c0"/><rect x="828.24" y="13.6" width="1.3" height="3.2" fill="#c0c0c0"/><rect x="845.86" y="13.6" width="1.3" height="3.2" fill="#c0c0c0"/><rect x="863.58" y="10" width="1.2" height="6.6" fill="#cacaca"/><rect x="881.10" y="13.6" width="1.3" height="3.2" fill="#c0c0c0"/><rect x="898.72" y="13.6" width="1.3" height="3.2" fill="#c0c0c0"/><rect x="916.34" y="13.6" width="1.3" height="3.2" fill="#c0c0c0"/><rect x="933.96" y="13.6" width="1.3" height="3.2" fill="#c0c0c0"/><rect x="951.58" y="13.6" width="1.3" height="3.2" fill="#c0c0c0"/><rect x="969.20" y="13.6" width="1.3" height="3.2" fill="#c0c0c0"/><rect x="986.82" y="13.6" width="1.3" height="3.2" fill="#c0c0c0"/><rect x="1004.44" y="13.6" width="1.3" height="3.2" fill="#c0c0c0"/><rect x="1022.06" y="13.6" width="1.3" height="3.2" fill="#c0c0c0"/><rect x="1039.78" y="10" width="1.2" height="6.6" fill="#cacaca"/><rect x="1057.30" y="13.6" width="1.3" height="3.2" fill="#c0c0c0"/><rect x="1074.92" y="13.6" width="1.3" height="3.2" fill="#c0c0c0"/><rect x="1092.54" y="13.6" width="1.3" height="3.2" fill="#c0c0c0"/><rect x="1110.16" y="13.6" width="1.3" height="3.2" fill="#c0c0c0"/><rect x="1127.78" y="13.6" width="1.3" height="3.2" fill="#c0c0c0"/><rect x="1145.40" y="13.6" width="1.3" height="3.2" fill="#c0c0c0"/><rect x="1163.02" y="13.6" width="1.3" height="3.2" fill="#c0c0c0"/><rect x="1180.64" y="13.6" width="1.3" height="3.2" fill="#c0c0c0"/><rect x="1198.26" y="13.6" width="1.3" height="3.2" fill="#c0c0c0"/><rect x="1215.98" y="10" width="1.2" height="6.6" fill="#cacaca"/><rect x="1233.50" y="13.6" width="1.3" height="3.2" fill="#c0c0c0"/><rect x="1251.12" y="13.6" width="1.3" height="3.2" fill="#c0c0c0"/><rect x="1268.74" y="13.6" width="1.3" height="3.2" fill="#c0c0c0"/><rect x="1286.36" y="13.6" width="1.3" height="3.2" fill="#c0c0c0"/><rect x="1303.98" y="13.6" width="1.3" height="3.2" fill="#c0c0c0"/><rect x="1321.60" y="13.6" width="1.3" height="3.2" fill="#c0c0c0"/><rect x="1339.22" y="13.6" width="1.3" height="3.2" fill="#c0c0c0"/><rect x="1356.84" y="13.6" width="1.3" height="3.2" fill="#c0c0c0"/><rect x="1374.46" y="13.6" width="1.3" height="3.2" fill="#c0c0c0"/><rect x="1392.18" y="10" width="1.2" height="6.6" fill="#cacaca"/><rect x="1409.70" y="13.6" width="1.3" height="3.2" fill="#c0c0c0"/><rect x="1427.32" y="13.6" width="1.3" height="3.2" fill="#c0c0c0"/><rect x="1444.94" y="13.6" width="1.3" height="3.2" fill="#c0c0c0"/><rect x="1462.56" y="13.6" width="1.3" height="3.2" fill="#c0c0c0"/><rect x="1480.18" y="13.6" width="1.3" height="3.2" fill="#c0c0c0"/><rect x="1497.80" y="13.6" width="1.3" height="3.2" fill="#c0c0c0"/><rect x="1515.42" y="13.6" width="1.3" height="3.2" fill="#c0c0c0"/><rect x="1533.04" y="13.6" width="1.3" height="3.2" fill="#c0c0c0"/><rect x="1550.66" y="13.6" width="1.3" height="3.2" fill="#c0c0c0"/><rect x="1568.38" y="10" width="1.2" height="6.6" fill="#cacaca"/><rect x="1585.90" y="13.6" width="1.3" height="3.2" fill="#c0c0c0"/><rect x="1603.52" y="13.6" width="1.3" height="3.2" fill="#c0c0c0"/><rect x="1621.14" y="13.6" width="1.3" height="3.2" fill="#c0c0c0"/><rect x="1638.76" y="13.6" width="1.3" height="3.2" fill="#c0c0c0"/><rect x="1656.38" y="13.6" width="1.3" height="3.2" fill="#c0c0c0"/><rect x="1674.00" y="13.6" width="1.3" height="3.2" fill="#c0c0c0"/><rect x="1691.62" y="13.6" width="1.3" height="3.2" fill="#c0c0c0"/><rect x="1709.24" y="13.6" width="1.3" height="3.2" fill="#c0c0c0"/><rect x="1726.86" y="13.6" width="1.3" height="3.2" fill="#c0c0c0"/><rect x="1744.58" y="10" width="1.2" height="12.4" fill="#cacaca"/><rect x="88.6" y="16.8" width="18.6" height="2.2" fill="#2e6fd9"/><rect x="141.5" y="16.8" width="18.6" height="2.2" fill="#2e6fd9"/><rect x="282.4" y="16.8" width="18.6" height="2.2" fill="#2e6fd9"/><rect x="388.1" y="16.8" width="36.2" height="2.2" fill="#2e6fd9"/><rect x="969.6" y="16.8" width="18.6" height="2.2" fill="#2e6fd9"/><path d="M610.7,9 H624.7 L617.7,15.5 Z" fill="#f08a1c"/></svg>
<span class="t" style="top:746px;font-size:10px;color:#f08a1c;letter-spacing:0.4px;left:425px;width:600px;text-align:center;">36</span>
<span class="t" style="top:770px;font-size:10px;color:#d6d6d6;letter-spacing:0.2px;left:108px;">1</span>
<span class="t" style="top:770px;font-size:10px;color:#d6d6d6;letter-spacing:0.5px;left:-34px;width:600px;text-align:center;">10</span>
<span class="t" style="top:770px;font-size:10px;color:#d6d6d6;letter-spacing:0.5px;left:142px;width:600px;text-align:center;">20</span>
<span class="t" style="top:770px;font-size:10px;color:#d6d6d6;letter-spacing:0.5px;left:318px;width:600px;text-align:center;">30</span>
<span class="t" style="top:770px;font-size:10px;color:#d6d6d6;letter-spacing:0.5px;left:495px;width:600px;text-align:center;">40</span>
<span class="t" style="top:770px;font-size:10px;color:#d6d6d6;letter-spacing:0.5px;left:671px;width:600px;text-align:center;">50</span>
<span class="t" style="top:770px;font-size:10px;color:#d6d6d6;letter-spacing:0.5px;left:847px;width:600px;text-align:center;">60</span>
<span class="t" style="top:770px;font-size:10px;color:#d6d6d6;letter-spacing:0.5px;left:1023px;width:600px;text-align:center;">70</span>
<span class="t" style="top:770px;font-size:10px;color:#d6d6d6;letter-spacing:0.5px;left:1199px;width:600px;text-align:center;">80</span>
<span class="t" style="top:770px;font-size:10px;color:#d6d6d6;letter-spacing:0.5px;left:1376px;width:600px;text-align:center;">90</span>
<span class="t" style="top:770px;font-size:10px;color:#d6d6d6;letter-spacing:0.5px;left:1552px;width:600px;text-align:center;">100</span>
<div style="left:1875px;top:758px;width:48px;height:30px;background:#3a3a3a;border-radius:3px;box-shadow:inset 0 0 0 1px #383838;"></div>
<span class="t" style="top:760px;font-size:11px;color:#d2d2d2;letter-spacing:0.2px;left:1598px;width:600px;text-align:center;">74</span>
<svg style="left:1928px;top:778px;" width="10" height="12" viewBox="0 0 10 12"><path d="M1,1 L5,5 L9,1 M1,6 L5,10 L9,6" stroke="#8a8a8a" stroke-width="1.3" fill="none"/></svg>
<div style="left:53px;top:796px;width:59px;height:18px;background:#4a4a4a;border-radius:3px;box-shadow:inset 0 0 0 1px #222;"></div>
<div style="left:54px;top:797px;width:42px;height:16px;background:#3a3a3a;border-radius:2px 0 0 2px;box-shadow:1px 0 0 #222"></div>
<span class="t" style="top:791px;font-size:11px;color:#d2d2d2;letter-spacing:0.2px;left:56px;">24*</span>
<svg style="left:101px;top:803px;" width="6" height="4" viewBox="0 0 6 4"><path d="M0,0 H6 L3.0,4 Z" fill="#d2d2d2"/></svg>
<span class="t" style="top:791px;font-size:11px;color:#d2d2d2;letter-spacing:0.2px;left:120px;">TF</span>
<svg style="left:135px;top:802px;" width="7" height="4" viewBox="0 0 7 4"><path d="M0,0 H7 L3.5,4 Z" fill="#d2d2d2"/></svg>
<div style="left:150px;top:794px;width:1px;height:21px;background:#1e1e1e;"></div>
<div style="left:151px;top:794px;width:1px;height:21px;background:#3e3e3e;"></div>
<span class="t" style="top:791px;font-size:11px;color:#d2d2d2;letter-spacing:0.2px;left:159px;">Global</span>
<svg style="left:209px;top:802px;" width="7" height="4" viewBox="0 0 7 4"><path d="M0,0 H7 L3.5,4 Z" fill="#d2d2d2"/></svg>
<div style="left:224px;top:794px;width:1px;height:21px;background:#1e1e1e;"></div>
<div style="left:225px;top:794px;width:1px;height:21px;background:#3e3e3e;"></div>
<svg style="left:765px;top:796px;" width="23" height="18" viewBox="0 0 23 18"><path d="M1,4.6 H11 V1.4 L17,6 L11,10.6 V7.4 H1 Z" fill="#9c9c9c"/><path d="M2,10 C1.6,14.6 4,15.6 8.6,15.4 V17.6 L3.6,13.8 L8.6,10 V12.6 C6,12.8 4.6,12.6 4.6,10 Z" fill="#9c9c9c" transform="translate(18,25) rotate(180)"/><path d="M1.5,9.4 C1,14 3,15.4 9,15.2" stroke="#9c9c9c" stroke-width="2.2" fill="none"/><path d="M16,13.6 H22.4 L19.2,17.4 Z" fill="#e4e4e4"/></svg>
<div style="left:797px;top:793px;width:17px;height:23px;background:linear-gradient(#494949,#393939);border-radius:3px;box-shadow:inset 0 0 0 1px #242424;"></div>
<span class="w" style="top:791px;font-size:12px;color:#e8431c;left:506px;width:600px;text-align:center;font-family:'Liberation Serif',serif;">I</span>
<div style="left:816px;top:793px;width:30px;height:23px;background:linear-gradient(#494949,#393939);border-radius:3px;box-shadow:inset 0 0 0 1px #242424;"></div>
<svg style="left:822px;top:797px;" width="18" height="15" viewBox="0 0 18 15"><g transform="translate(9 7.5) scale(0.82) translate(-9 -7.5)"><rect x="2.4" y="1" width="2.4" height="13" fill="#9c9c9c"/><path d="M15.5,1 V14 L5.5,7.5 Z" fill="#9c9c9c"/></g></svg>
<div style="left:848px;top:793px;width:30px;height:23px;background:linear-gradient(#494949,#393939);border-radius:3px;box-shadow:inset 0 0 0 1px #242424;"></div>
<svg style="left:854px;top:797px;" width="18" height="15" viewBox="0 0 18 15"><g transform="translate(9 7.5) scale(0.82) translate(-9 -7.5)"><path d="M17,1 V14 L7,7.5 Z" fill="#9c9c9c"/><circle cx="3.4" cy="11.4" r="2" stroke="#9c9c9c" stroke-width="1.2" fill="none"/><path d="M3.4,9.4 V3" stroke="#9c9c9c" stroke-width="1.3"/></g></svg>
<div style="left:880px;top:793px;width:30px;height:23px;background:linear-gradient(#494949,#393939);border-radius:3px;box-shadow:inset 0 0 0 1px #242424;"></div>
<svg style="left:886px;top:797px;" width="18" height="15" viewBox="0 0 18 15"><g transform="translate(9 7.5) scale(0.82) translate(-9 -7.5)"><path d="M11.4,1 V14 L1.4,7.5 Z" fill="#9c9c9c"/><rect x="13" y="1" width="2.2" height="13" fill="#9c9c9c"/></g></svg>
<div style="left:912px;top:793px;width:30px;height:23px;background:linear-gradient(#494949,#393939);border-radius:3px;box-shadow:inset 0 0 0 1px #242424;"></div>
<svg style="left:918px;top:797px;" width="18" height="15" viewBox="0 0 18 15"><g transform="translate(9 7.5) scale(0.82) translate(-9 -7.5)"><path d="M14,1 V14 L4,7.5 Z" fill="#9c9c9c"/></g></svg>
<div style="left:944px;top:794px;width:48px;height:22px;background:#383838;border-radius:3px;"></div>
<span class="t" style="top:792px;font-size:11px;color:#f08a1c;letter-spacing:0.2px;left:667px;width:600px;text-align:center;">36</span>
<div style="left:994px;top:793px;width:30px;height:23px;background:linear-gradient(#494949,#393939);border-radius:3px;box-shadow:inset 0 0 0 1px #242424;"></div>
<svg style="left:1000px;top:797px;" width="18" height="15" viewBox="0 0 18 15"><g transform="translate(9 7.5) scale(0.82) translate(-9 -7.5)"><path d="M4,1 V14 L14,7.5 Z" fill="#9c9c9c"/></g></svg>
<div style="left:1026px;top:793px;width:30px;height:23px;background:linear-gradient(#494949,#393939);border-radius:3px;box-shadow:inset 0 0 0 1px #242424;"></div>
<svg style="left:1032px;top:797px;" width="18" height="15" viewBox="0 0 18 15"><g transform="translate(9 7.5) scale(0.82) translate(-9 -7.5)"><rect x="2.8" y="1" width="2.2" height="13" fill="#9c9c9c"/><path d="M6.6,1 V14 L16.6,7.5 Z" fill="#9c9c9c"/></g></svg>
<div style="left:1058px;top:793px;width:30px;height:23px;background:linear-gradient(#494949,#393939);border-radius:3px;box-shadow:inset 0 0 0 1px #242424;"></div>
<svg style="left:1064px;top:797px;" width="18" height="15" viewBox="0 0 18 15"><g transform="translate(9 7.5) scale(0.82) translate(-9 -7.5)"><path d="M1,1 V14 L11,7.5 Z" fill="#9c9c9c"/><circle cx="14.6" cy="11.4" r="2" stroke="#9c9c9c" stroke-width="1.2" fill="none"/><path d="M14.6,9.4 V3" stroke="#9c9c9c" stroke-width="1.3"/></g></svg>
<div style="left:1090px;top:793px;width:30px;height:23px;background:linear-gradient(#494949,#393939);border-radius:3px;box-shadow:inset 0 0 0 1px #242424;"></div>
<svg style="left:1096px;top:797px;" width="18" height="15" viewBox="0 0 18 15"><g transform="translate(9 7.5) scale(0.82) translate(-9 -7.5)"><path d="M2.5,1 V14 L12.5,7.5 Z" fill="#9c9c9c"/><rect x="13.2" y="1" width="2.4" height="13" fill="#9c9c9c"/></g></svg>
<div style="left:1122px;top:793px;width:16px;height:23px;background:linear-gradient(#494949,#393939);border-radius:3px;box-shadow:inset 0 0 0 1px #242424;"></div>
<span class="t" style="top:792px;font-size:11px;color:#e8431c;letter-spacing:0.2px;left:830px;width:600px;text-align:center;">O</span>
<div style="left:1151px;top:795px;width:22px;height:20px;background:linear-gradient(#494949,#393939);border-radius:3px;box-shadow:inset 0 0 0 1px #242424;"></div>
<svg style="left:1155px;top:801px;" width="14" height="8" viewBox="0 0 14 8"><path d="M7,0 V8 L0.6,4 Z M13.6,0 V8 L7.2,4 Z" fill="#9c9c9c"/></svg>
<div style="left:1174px;top:795px;width:22px;height:20px;background:#3a3a3a;border-radius:3px;box-shadow:inset 0 0 0 1px #252525;"></div>
<span class="t" style="top:792px;font-size:11px;color:#d2d2d2;letter-spacing:0.2px;left:885px;width:600px;text-align:center;">10</span>
<div style="left:1197px;top:795px;width:22px;height:20px;background:linear-gradient(#494949,#393939);border-radius:3px;box-shadow:inset 0 0 0 1px #242424;"></div>
<svg style="left:1201px;top:801px;" width="14" height="8" viewBox="0 0 14 8"><path d="M0.4,0 V8 L6.8,4 Z M7,0 V8 L13.4,4 Z" fill="#9c9c9c"/></svg>
<svg style="left:1778px;top:799px;" width="14" height="12" viewBox="0 0 14 12"><rect width="14" height="12" fill="#a8a8a8"/><path d="M3.2,2 V10 L11.4,6 Z" fill="#323232"/></svg>
<svg style="left:1800px;top:799px;" width="14" height="12" viewBox="0 0 14 12"><rect width="14" height="12" fill="#a8a8a8"/><circle cx="7" cy="6" r="3.8" fill="#323232"/></svg>
<svg style="left:1825px;top:796px;" width="12" height="15" viewBox="0 0 12 15"><path d="M2.6,7 V4.6 C2.6,0.2 9.4,0.2 9.4,4.6 V7" stroke="#a8a8a8" stroke-width="1.6" fill="none"/><rect x="0" y="6.4" width="12" height="8.6" fill="#a8a8a8"/><circle cx="6" cy="9.6" r="1.2" fill="#323232"/><rect x="5.4" y="9.6" width="1.2" height="3" fill="#323232"/></svg>
<svg style="left:1851px;top:796px;" width="17" height="16" viewBox="0 0 17 16"><path d="M6,0.5 V9 L11.4,4.6 Z" fill="#f00000"/><path d="M0.5,9.6 V14.6 H16 V9.6 M4.4,12 V14.6 M8.2,11 V14.6 M12.2,12 V14.6" stroke="#f00000" stroke-width="1.3" fill="none"/><rect x="0.5" y="13.4" width="15.5" height="1.8" fill="#f00000"/></svg>
<div style="left:1875px;top:794px;width:48px;height:22px;background:#3a3a3a;border-radius:3px;box-shadow:inset 0 0 0 1px #383838;"></div>
<span class="t" style="top:791px;font-size:11px;color:#d2d2d2;letter-spacing:0.2px;left:1598px;width:600px;text-align:center;">74</span>
<div style="left:50px;top:821px;width:1891px;height:1px;background:#0c0c0c;"></div>
<div style="left:50px;top:822px;width:1891px;height:1px;background:#3c3c3c;"></div>
<div style="left:50px;top:823px;width:1891px;height:29px;background:#262626;"></div>
<div style="left:52px;top:826px;width:16px;height:16px;background:#4e4e4e;"></div>
<div style="left:52px;top:826px;width:8px;height:10px;background:#b2b2b2;"></div>
<div style="left:52px;top:836px;width:8px;height:6px;background:#888888;"></div>
<div style="left:60px;top:826px;width:1px;height:16px;background:#6e6e6e;"></div>
<div style="left:193px;top:828px;width:127px;height:23px;background:#2c2c2c;border-radius:5px 5px 0 0;box-shadow:inset 1px 1px 0 #1c1c1c, inset -1px 0 0 #1c1c1c;"></div>
<div style="left:321px;top:828px;width:117px;height:23px;background:#2c2c2c;border-radius:5px 5px 0 0;box-shadow:inset 1px 1px 0 #1c1c1c, inset -1px 0 0 #1c1c1c;"></div>
<div style="left:73px;top:825px;width:120px;height:27px;background:#323232;border-radius:5px 5px 0 0;box-shadow:inset 1px 1px 0 #1c1c1c, inset -1px 0 0 #1c1c1c;"></div>
<span class="t" style="top:825px;font-size:11px;color:#f0921e;letter-spacing:0.2px;left:87px;">Node Graph</span>
<svg style="left:164px;top:830px;" width="16" height="16" viewBox="0 0 16 16"><circle cx="8" cy="8" r="7" fill="#383838"/><path d="M5,5 L11,11 M11,5 L5,11" stroke="#8a8a8a" stroke-width="2" fill="none"/></svg>
<span class="t" style="top:826px;font-size:11px;color:#d2d2d2;letter-spacing:0.2px;left:209px;">Curve Editor</span>
<svg style="left:290px;top:831px;" width="16" height="16" viewBox="0 0 16 16"><circle cx="8" cy="8" r="7" fill="#3c3c3c"/><path d="M5,5 L11,11 M11,5 L5,11" stroke="#6e6e6e" stroke-width="2" fill="none"/></svg>
<span class="t" style="top:826px;font-size:11px;color:#d2d2d2;letter-spacing:0.2px;left:335px;">Dope Sheet</span>
<svg style="left:411px;top:831px;" width="16" height="16" viewBox="0 0 16 16"><circle cx="8" cy="8" r="7" fill="#3c3c3c"/><path d="M5,5 L11,11 M11,5 L5,11" stroke="#6e6e6e" stroke-width="2" fill="none"/></svg>
<div style="left:50px;top:852px;width:1891px;height:513px;background:#323232;overflow:hidden"><div style="left:-50px;top:-852px;width:2560px;height:1440px">
<svg style="left:0px;top:0px;" width="2560" height="1440" viewBox="0 0 2560 1440"><path d="M679,869 V905" stroke="#000" stroke-width="2" fill="none"/><path d="M674.4,899 H683.6 L679,911 Z" fill="#000"/><path d="M679,930 V1033" stroke="#000" stroke-width="2" fill="none"/><path d="M674.4,1027 H683.6 L679,1039 Z" fill="#000"/><path d="M679,1058 V1225" stroke="#000" stroke-width="2" fill="none"/><path d="M674.4,1219 H683.6 L679,1231 Z" fill="#000"/><path d="M679,1250 V1302" stroke="#000" stroke-width="2" fill="none"/><path d="M675,1294 H683 L679,1302 Z" fill="#000"/><path d="M679,1321 V1366" stroke="#000" stroke-width="2" fill="none"/><path d="M675,1223 H683 L679,1231 Z" fill="#000"/><path d="M453,1049 H640" stroke="#000" stroke-width="2" fill="none"/><path d="M455,1049 L467,1044 V1054 Z" fill="#000"/><path d="M447,1054 V1068" stroke="#000" stroke-width="2" fill="none"/><path d="M442.4,1062 H451.6 L447,1074 Z" fill="#000"/><path d="M433,1107 L443,1138 M447,1105 V1138 M461,1107 L451,1138" stroke="#000" stroke-width="2" fill="none"/><path d="M439,1131 L447,1129 L444.5,1142 Z M442.5,1131 H451.5 L447,1142 Z M446.5,1130 L455,1133 L449.5,1142 Z" fill="#000"/><path d="M420,1132 L429,1139" stroke="#000" stroke-width="2"/><path d="M424,1140 L432,1141 L428,1134 Z" fill="#000"/><path d="M433,1143 L443,1174 M447,1141 V1174 M461,1143 L451,1174" stroke="#000" stroke-width="2" fill="none"/><path d="M439,1167 L447,1165 L444.5,1178 Z M442.5,1167 H451.5 L447,1178 Z M446.5,1166 L455,1169 L449.5,1178 Z" fill="#000"/><path d="M420,1168 L429,1175" stroke="#000" stroke-width="2"/><path d="M424,1176 L432,1177 L428,1170 Z" fill="#000"/><path d="M447,1197 V1225" stroke="#000" stroke-width="2" fill="none"/><path d="M442.4,1219 H451.6 L447,1231 Z" fill="#000"/><path d="M489,1241 H632" stroke="#000" stroke-width="2" fill="none"/><path d="M487,1241 L493,1237 V1245 Z" fill="#000"/><path d="M640,1241 L633,1236.5 V1245.5 Z" fill="#000"/><path d="M634,1241 L627,1236.5 V1245.5 Z" fill="#000"/><path d="M728,1312 H1034" stroke="#000" stroke-width="2" fill="none"/><path d="M719,1312 L726,1307.5 V1316.5 Z" fill="#000"/><path d="M725,1312 L732,1307.5 V1316.5 Z" fill="#000"/><path d="M1039,852 V885" stroke="#000" stroke-width="2" fill="none"/><path d="M1034.4,879 H1043.6 L1039,891 Z" fill="#000"/><path d="M1039,910 V922" stroke="#000" stroke-width="2" fill="none"/><path d="M1034.4,916 H1043.6 L1039,928 Z" fill="#000"/><path d="M1039,947 V955" stroke="#000" stroke-width="2" fill="none"/><path d="M1034,948 H1044 L1039,955 Z" fill="#000"/><path d="M1034,986 H1044 L1039,993 Z" fill="#000"/><path d="M1039,1023 V1033" stroke="#000" stroke-width="2" fill="none"/><path d="M1034.4,1027 H1043.6 L1039,1039 Z" fill="#000"/><path d="M1039,1057 V1110" stroke="#000" stroke-width="2" fill="none"/><path d="M1034.4,1104 H1043.6 L1039,1116 Z" fill="#000"/><path d="M1039,1147 V1162" stroke="#000" stroke-width="2" fill="none"/><path d="M1034.4,1156 H1043.6 L1039,1168 Z" fill="#000"/><path d="M1039,1186 V1221" stroke="#000" stroke-width="2" fill="none"/><path d="M1034.4,1215 H1043.6 L1039,1227 Z" fill="#000"/><path d="M1039,1259 V1301" stroke="#000" stroke-width="2" fill="none"/><path d="M1034.4,1295 H1043.6 L1039,1307 Z" fill="#000"/><path d="M1227,852 V893" stroke="#000" stroke-width="2" fill="none"/><path d="M1222.4,887 H1231.6 L1227,899 Z" fill="#000"/><path d="M1227,918 V929" stroke="#000" stroke-width="2" fill="none"/><path d="M1222,919 H1232 L1227,929 Z" fill="#000"/><path d="M1222,949 H1232 L1227,956 Z" fill="#000"/><path d="M1222,987 H1232 L1227,994 Z" fill="#000"/><path d="M1227,1024 V1034" stroke="#000" stroke-width="2" fill="none"/><path d="M1222.4,1028 H1231.6 L1227,1040 Z" fill="#000"/><path d="M1227,1059 V1112" stroke="#000" stroke-width="2" fill="none"/><path d="M1222.4,1106 H1231.6 L1227,1118 Z" fill="#000"/><path d="M1227,1148 V1164" stroke="#000" stroke-width="2" fill="none"/><path d="M1222.4,1158 H1231.6 L1227,1170 Z" fill="#000"/><path d="M1227,1188 V1368" stroke="#000" stroke-width="2" fill="none"/><path d="M1222.4,1362 H1231.6 L1227,1374 Z" fill="#000"/><path d="M829,1024 L1026,1168" stroke="#000" stroke-width="1.6" stroke-dasharray="1.6 3" fill="none"/><path d="M822,1019 L833.5,1021 L827.5,1029.5 Z" fill="#000"/></svg>
<div style="left:639px;top:838px;width:80px;height:32px;background:#1b1b1b;border-radius:1px;"></div>
<div style="left:640px;top:839px;width:78px;height:30px;background:linear-gradient(#7ecb7e,#4f9550);box-shadow:inset 1px 1px 0 rgba(255,255,255,0.38), inset -1px -1px 0 rgba(0,0,0,0.12);"></div>
<span class="t" style="top:835px;font-size:11px;color:#050505;left:378px;width:600px;text-align:center;-webkit-text-stroke:0.2px #050505;">Roto1</span>
<span class="t" style="top:847px;font-size:11px;color:#050505;left:378px;width:600px;text-align:center;-webkit-text-stroke:0.2px #050505;">(alpha)</span>
<div style="left:644px;top:865px;width:2px;height:3px;background:#ff0000;"></div>
<div style="left:652px;top:865px;width:2px;height:3px;background:#00e400;"></div>
<div style="left:659px;top:865px;width:2px;height:3px;background:#0000ff;"></div>
<div style="left:664px;top:865px;width:8px;height:3px;background:#ffffff;"></div>
<svg style="left:719.5px;top:851px;" width="4" height="7" viewBox="0 0 4 7"><path d="M4,0 V7 L0,3.5 Z" fill="#0a0a0a"/></svg>
<svg style="left:635px;top:851px;" width="4" height="7" viewBox="0 0 4 7"><path d="M0,0 V7 L4,3.5 Z" fill="#0a0a0a"/></svg>
<div style="left:639px;top:911px;width:80px;height:20px;background:#1b1b1b;border-radius:1px;"></div>
<div style="left:640px;top:912px;width:78px;height:18px;background:linear-gradient(#a9bbea,#7484b4);box-shadow:inset 1px 1px 0 rgba(255,255,255,0.38), inset -1px -1px 0 rgba(0,0,0,0.12);"></div>
<span class="t" style="top:908px;font-size:11px;color:#050505;left:378px;width:600px;text-align:center;-webkit-text-stroke:0.2px #050505;">HueCorrect1</span>
<div style="left:642px;top:926px;width:7px;height:3px;background:#ff0000;"></div>
<div style="left:649px;top:926px;width:7px;height:3px;background:#00e400;"></div>
<div style="left:656px;top:926px;width:8px;height:3px;background:#0000ff;"></div>
<div style="left:666px;top:926px;width:2px;height:3px;background:#ffffff;"></div>
<svg style="left:719.5px;top:918px;" width="4" height="7" viewBox="0 0 4 7"><path d="M4,0 V7 L0,3.5 Z" fill="#0a0a0a"/></svg>
<div style="left:639px;top:1039px;width:80px;height:20px;background:#1b1b1b;border-radius:1px;"></div>
<div style="left:640px;top:1040px;width:78px;height:18px;background:linear-gradient(#e6e6e6,#9c9c9c);box-shadow:inset 1px 1px 0 rgba(255,255,255,0.38), inset -1px -1px 0 rgba(0,0,0,0.12);"></div>
<span class="t" style="top:1036px;font-size:11px;color:#050505;left:378px;width:600px;text-align:center;-webkit-text-stroke:0.2px #050505;">Premult1</span>
<div style="left:642px;top:1054px;width:7px;height:3px;background:#ff0000;"></div>
<div style="left:649px;top:1054px;width:7px;height:3px;background:#00e400;"></div>
<div style="left:656px;top:1054px;width:8px;height:3px;background:#0000ff;"></div>
<div style="left:666px;top:1054px;width:2px;height:3px;background:#ffffff;"></div>
<div style="left:406px;top:1074px;width:81px;height:32px;background:#1b1b1b;border-radius:1px;"></div>
<div style="left:407px;top:1075px;width:79px;height:30px;background:linear-gradient(#ee9f63,#ae6536);box-shadow:inset 1px 1px 0 rgba(255,255,255,0.38), inset -1px -1px 0 rgba(0,0,0,0.12);"></div>
<span class="t" style="top:1071px;font-size:11px;color:#050505;left:146px;width:600px;text-align:center;-webkit-text-stroke:0.2px #050505;">Blur4</span>
<span class="t" style="top:1083px;font-size:11px;color:#050505;left:146px;width:600px;text-align:center;-webkit-text-stroke:0.2px #050505;">(all)</span>
<svg style="left:487.5px;top:1087px;" width="4" height="7" viewBox="0 0 4 7"><path d="M4,0 V7 L0,3.5 Z" fill="#0a0a0a"/></svg>
<div style="left:406px;top:1142px;width:81px;height:20px;background:#1b1b1b;border-radius:1px;"></div>
<div style="left:407px;top:1143px;width:79px;height:18px;background:linear-gradient(#ee9f63,#ae6536);box-shadow:inset 1px 1px 0 rgba(255,255,255,0.38), inset -1px -1px 0 rgba(0,0,0,0.12);"></div>
<span class="t" style="top:1139px;font-size:11px;color:#050505;left:146px;width:600px;text-align:center;-webkit-text-stroke:0.2px #050505;">MotionBlur1</span>
<div style="left:406px;top:1178px;width:81px;height:20px;background:#1b1b1b;border-radius:1px;"></div>
<div style="left:407px;top:1179px;width:79px;height:18px;background:linear-gradient(#ee9f63,#ae6536);box-shadow:inset 1px 1px 0 rgba(255,255,255,0.38), inset -1px -1px 0 rgba(0,0,0,0.12);"></div>
<span class="t" style="top:1175px;font-size:11px;color:#050505;left:146px;width:600px;text-align:center;-webkit-text-stroke:0.2px #050505;">MotionBlur2</span>
<div style="left:409px;top:1193px;width:7px;height:3px;background:#ff0000;"></div>
<div style="left:416px;top:1193px;width:7px;height:3px;background:#00e400;"></div>
<div style="left:423px;top:1193px;width:8px;height:3px;background:#0000ff;"></div>
<div style="left:431px;top:1193px;width:8px;height:3px;background:#ffffff;"></div>
<div style="left:406px;top:1231px;width:81px;height:20px;background:#1b1b1b;border-radius:1px;"></div>
<div style="left:407px;top:1232px;width:79px;height:18px;background:linear-gradient(#ee9f63,#ae6536);box-shadow:inset 1px 1px 0 rgba(255,255,255,0.38), inset -1px -1px 0 rgba(0,0,0,0.12);"></div>
<span class="t" style="top:1228px;font-size:11px;color:#050505;left:146px;width:600px;text-align:center;-webkit-text-stroke:0.2px #050505;">Glow1</span>
<div style="left:639px;top:1231px;width:80px;height:20px;background:#1b1b1b;border-radius:1px;"></div>
<div style="left:640px;top:1232px;width:78px;height:18px;background:linear-gradient(#5c70e4,#3c48a4);box-shadow:inset 1px 1px 0 rgba(255,255,255,0.38), inset -1px -1px 0 rgba(0,0,0,0.12);"></div>
<span class="t" style="top:1228px;font-size:11px;color:#050505;left:378px;width:600px;text-align:center;-webkit-text-stroke:0.2px #050505;">Merge3 (over)</span>
<svg style="left:719.5px;top:1238px;" width="4" height="7" viewBox="0 0 4 7"><path d="M4,0 V7 L0,3.5 Z" fill="#0a0a0a"/></svg>
<div style="left:639px;top:1302px;width:80px;height:20px;background:#1b1b1b;border-radius:1px;"></div>
<div style="left:640px;top:1303px;width:78px;height:18px;background:linear-gradient(#5c70e4,#3c48a4);box-shadow:inset 1px 1px 0 rgba(255,255,255,0.38), inset -1px -1px 0 rgba(0,0,0,0.12);"></div>
<span class="t" style="top:1299px;font-size:11px;color:#050505;left:378px;width:600px;text-align:center;-webkit-text-stroke:0.2px #050505;">Merge1 (over)</span>
<svg style="left:634px;top:1309px;" width="4" height="7" viewBox="0 0 4 7"><path d="M0,0 V7 L4,3.5 Z" fill="#0a0a0a"/></svg>
<div style="left:998px;top:891px;width:80px;height:20px;background:#1b1b1b;border-radius:1px;"></div>
<div style="left:999px;top:892px;width:78px;height:18px;background:linear-gradient(#a9bbea,#7484b4);box-shadow:inset 1px 1px 0 rgba(255,255,255,0.38), inset -1px -1px 0 rgba(0,0,0,0.12);"></div>
<span class="t" style="top:888px;font-size:11px;color:#050505;left:738px;width:600px;text-align:center;-webkit-text-stroke:0.2px #050505;">Grade2</span>
<div style="left:1001px;top:906px;width:7px;height:3px;background:#ff0000;"></div>
<div style="left:1008px;top:906px;width:7px;height:3px;background:#00e400;"></div>
<div style="left:1015px;top:906px;width:8px;height:3px;background:#0000ff;"></div>
<div style="left:1025px;top:906px;width:2px;height:3px;background:#ffffff;"></div>
<svg style="left:1078.5px;top:898px;" width="4" height="7" viewBox="0 0 4 7"><path d="M4,0 V7 L0,3.5 Z" fill="#0a0a0a"/></svg>
<div style="left:998px;top:928px;width:80px;height:20px;background:#1b1b1b;border-radius:1px;"></div>
<div style="left:999px;top:929px;width:78px;height:18px;background:linear-gradient(#a9bbea,#7484b4);box-shadow:inset 1px 1px 0 rgba(255,255,255,0.38), inset -1px -1px 0 rgba(0,0,0,0.12);"></div>
<span class="t" style="top:925px;font-size:11px;color:#050505;left:738px;width:600px;text-align:center;-webkit-text-stroke:0.2px #050505;">ColorCorrect1</span>
<div style="left:1001px;top:943px;width:7px;height:3px;background:#ff0000;"></div>
<div style="left:1008px;top:943px;width:7px;height:3px;background:#00e400;"></div>
<div style="left:1015px;top:943px;width:8px;height:3px;background:#0000ff;"></div>
<div style="left:1025px;top:943px;width:2px;height:3px;background:#ffffff;"></div>
<svg style="left:1078.5px;top:935px;" width="4" height="7" viewBox="0 0 4 7"><path d="M4,0 V7 L0,3.5 Z" fill="#0a0a0a"/></svg>
<div style="left:998px;top:954px;width:80px;height:32px;background:#1b1b1b;border-radius:1px;"></div>
<div style="left:999px;top:955px;width:78px;height:30px;background:linear-gradient(#ee9f63,#ae6536);box-shadow:inset 1px 1px 0 rgba(255,255,255,0.38), inset -1px -1px 0 rgba(0,0,0,0.12);"></div>
<span class="t" style="top:951px;font-size:11px;color:#050505;left:738px;width:600px;text-align:center;-webkit-text-stroke:0.2px #050505;">FilterErode1</span>
<span class="t" style="top:963px;font-size:11px;color:#050505;left:738px;width:600px;text-align:center;-webkit-text-stroke:0.2px #050505;">(alpha)</span>
<div style="left:1003px;top:980px;width:2px;height:3px;background:#ff0000;"></div>
<div style="left:1011px;top:980px;width:2px;height:3px;background:#00e400;"></div>
<div style="left:1018px;top:980px;width:2px;height:3px;background:#0000ff;"></div>
<div style="left:1023px;top:980px;width:8px;height:3px;background:#ffffff;"></div>
<svg style="left:1078.5px;top:967px;" width="4" height="7" viewBox="0 0 4 7"><path d="M4,0 V7 L0,3.5 Z" fill="#0a0a0a"/></svg>
<div style="left:998px;top:992px;width:80px;height:32px;background:#1b1b1b;border-radius:1px;"></div>
<div style="left:999px;top:993px;width:78px;height:30px;background:linear-gradient(#ee9f63,#ae6536);box-shadow:inset 1px 1px 0 rgba(255,255,255,0.38), inset -1px -1px 0 rgba(0,0,0,0.12);"></div>
<span class="t" style="top:989px;font-size:11px;color:#050505;left:738px;width:600px;text-align:center;-webkit-text-stroke:0.2px #050505;">Blur2</span>
<span class="t" style="top:1001px;font-size:11px;color:#050505;left:738px;width:600px;text-align:center;-webkit-text-stroke:0.2px #050505;">(alpha)</span>
<div style="left:1003px;top:1018px;width:2px;height:3px;background:#ff0000;"></div>
<div style="left:1011px;top:1018px;width:2px;height:3px;background:#00e400;"></div>
<div style="left:1018px;top:1018px;width:2px;height:3px;background:#0000ff;"></div>
<div style="left:1023px;top:1018px;width:8px;height:3px;background:#ffffff;"></div>
<svg style="left:1078.5px;top:1005px;" width="4" height="7" viewBox="0 0 4 7"><path d="M4,0 V7 L0,3.5 Z" fill="#0a0a0a"/></svg>
<div style="left:998px;top:1038px;width:80px;height:20px;background:#1b1b1b;border-radius:1px;"></div>
<div style="left:999px;top:1039px;width:78px;height:18px;background:linear-gradient(#e6e6e6,#9c9c9c);box-shadow:inset 1px 1px 0 rgba(255,255,255,0.38), inset -1px -1px 0 rgba(0,0,0,0.12);"></div>
<span class="t" style="top:1035px;font-size:11px;color:#050505;left:738px;width:600px;text-align:center;-webkit-text-stroke:0.2px #050505;">Premult2</span>
<div style="left:1001px;top:1053px;width:7px;height:3px;background:#ff0000;"></div>
<div style="left:1008px;top:1053px;width:7px;height:3px;background:#00e400;"></div>
<div style="left:1015px;top:1053px;width:8px;height:3px;background:#0000ff;"></div>
<div style="left:1025px;top:1053px;width:2px;height:3px;background:#ffffff;"></div>
<div style="left:998px;top:1116px;width:80px;height:32px;background:#1b1b1b;border-radius:1px;"></div>
<div style="left:999px;top:1117px;width:78px;height:30px;background:linear-gradient(#c898cc,#8a628e);box-shadow:inset 1px 1px 0 rgba(255,255,255,0.38), inset -1px -1px 0 rgba(0,0,0,0.12);"></div>
<span class="t" style="top:1113px;font-size:11px;color:#050505;left:738px;width:600px;text-align:center;-webkit-text-stroke:0.2px #050505;">Reformat1</span>
<span class="t" style="top:1125px;font-size:11px;color:#050505;left:738px;width:600px;text-align:center;-webkit-text-stroke:0.2px #050505;">()</span>
<div style="left:1001px;top:1143px;width:7px;height:3px;background:#ff0000;"></div>
<div style="left:1008px;top:1143px;width:7px;height:3px;background:#00e400;"></div>
<div style="left:1015px;top:1143px;width:8px;height:3px;background:#0000ff;"></div>
<div style="left:1023px;top:1143px;width:8px;height:3px;background:#ffffff;"></div>
<div style="left:998px;top:1167px;width:80px;height:20px;background:#1b1b1b;border-radius:1px;"></div>
<div style="left:999px;top:1168px;width:78px;height:18px;background:linear-gradient(#c898cc,#8a628e);box-shadow:inset 1px 1px 0 rgba(255,255,255,0.38), inset -1px -1px 0 rgba(0,0,0,0.12);"></div>
<span class="t" style="top:1164px;font-size:11px;color:#050505;left:738px;width:600px;text-align:center;-webkit-text-stroke:0.2px #050505;">Transform1</span>
<div style="left:1001px;top:1182px;width:7px;height:3px;background:#ff0000;"></div>
<div style="left:1008px;top:1182px;width:7px;height:3px;background:#00e400;"></div>
<div style="left:1015px;top:1182px;width:8px;height:3px;background:#0000ff;"></div>
<div style="left:1023px;top:1182px;width:8px;height:3px;background:#ffffff;"></div>
<div style="left:1186px;top:899px;width:80px;height:20px;background:#1b1b1b;border-radius:1px;"></div>
<div style="left:1187px;top:900px;width:78px;height:18px;background:linear-gradient(#a9bbea,#7484b4);box-shadow:inset 1px 1px 0 rgba(255,255,255,0.38), inset -1px -1px 0 rgba(0,0,0,0.12);"></div>
<span class="t" style="top:896px;font-size:11px;color:#050505;left:926px;width:600px;text-align:center;-webkit-text-stroke:0.2px #050505;">Grade3</span>
<div style="left:1189px;top:914px;width:7px;height:3px;background:#ff0000;"></div>
<div style="left:1196px;top:914px;width:7px;height:3px;background:#00e400;"></div>
<div style="left:1203px;top:914px;width:8px;height:3px;background:#0000ff;"></div>
<div style="left:1213px;top:914px;width:2px;height:3px;background:#ffffff;"></div>
<svg style="left:1266.5px;top:906px;" width="4" height="7" viewBox="0 0 4 7"><path d="M4,0 V7 L0,3.5 Z" fill="#0a0a0a"/></svg>
<div style="left:1186px;top:929px;width:80px;height:20px;background:#1b1b1b;border-radius:1px;"></div>
<div style="left:1187px;top:930px;width:78px;height:18px;background:linear-gradient(#a9bbea,#7484b4);box-shadow:inset 1px 1px 0 rgba(255,255,255,0.38), inset -1px -1px 0 rgba(0,0,0,0.12);"></div>
<span class="t" style="top:926px;font-size:11px;color:#050505;left:926px;width:600px;text-align:center;-webkit-text-stroke:0.2px #050505;">ColorCorrect2</span>
<div style="left:1189px;top:944px;width:7px;height:3px;background:#ff0000;"></div>
<div style="left:1196px;top:944px;width:7px;height:3px;background:#00e400;"></div>
<div style="left:1203px;top:944px;width:8px;height:3px;background:#0000ff;"></div>
<div style="left:1213px;top:944px;width:2px;height:3px;background:#ffffff;"></div>
<svg style="left:1266.5px;top:936px;" width="4" height="7" viewBox="0 0 4 7"><path d="M4,0 V7 L0,3.5 Z" fill="#0a0a0a"/></svg>
<div style="left:1186px;top:955px;width:80px;height:32px;background:#1b1b1b;border-radius:1px;"></div>
<div style="left:1187px;top:956px;width:78px;height:30px;background:linear-gradient(#ee9f63,#ae6536);box-shadow:inset 1px 1px 0 rgba(255,255,255,0.38), inset -1px -1px 0 rgba(0,0,0,0.12);"></div>
<span class="t" style="top:952px;font-size:11px;color:#050505;left:926px;width:600px;text-align:center;-webkit-text-stroke:0.2px #050505;">FilterErode2</span>
<span class="t" style="top:964px;font-size:11px;color:#050505;left:926px;width:600px;text-align:center;-webkit-text-stroke:0.2px #050505;">(alpha)</span>
<div style="left:1191px;top:981px;width:2px;height:3px;background:#ff0000;"></div>
<div style="left:1199px;top:981px;width:2px;height:3px;background:#00e400;"></div>
<div style="left:1206px;top:981px;width:2px;height:3px;background:#0000ff;"></div>
<div style="left:1211px;top:981px;width:8px;height:3px;background:#ffffff;"></div>
<svg style="left:1266.5px;top:968px;" width="4" height="7" viewBox="0 0 4 7"><path d="M4,0 V7 L0,3.5 Z" fill="#0a0a0a"/></svg>
<div style="left:1186px;top:993px;width:80px;height:32px;background:#1b1b1b;border-radius:1px;"></div>
<div style="left:1187px;top:994px;width:78px;height:30px;background:linear-gradient(#ee9f63,#ae6536);box-shadow:inset 1px 1px 0 rgba(255,255,255,0.38), inset -1px -1px 0 rgba(0,0,0,0.12);"></div>
<span class="t" style="top:990px;font-size:11px;color:#050505;left:926px;width:600px;text-align:center;-webkit-text-stroke:0.2px #050505;">Blur3</span>
<span class="t" style="top:1002px;font-size:11px;color:#050505;left:926px;width:600px;text-align:center;-webkit-text-stroke:0.2px #050505;">(alpha)</span>
<div style="left:1191px;top:1019px;width:2px;height:3px;background:#ff0000;"></div>
<div style="left:1199px;top:1019px;width:2px;height:3px;background:#00e400;"></div>
<div style="left:1206px;top:1019px;width:2px;height:3px;background:#0000ff;"></div>
<div style="left:1211px;top:1019px;width:8px;height:3px;background:#ffffff;"></div>
<svg style="left:1266.5px;top:1006px;" width="4" height="7" viewBox="0 0 4 7"><path d="M4,0 V7 L0,3.5 Z" fill="#0a0a0a"/></svg>
<div style="left:1186px;top:1040px;width:80px;height:20px;background:#1b1b1b;border-radius:1px;"></div>
<div style="left:1187px;top:1041px;width:78px;height:18px;background:linear-gradient(#e6e6e6,#9c9c9c);box-shadow:inset 1px 1px 0 rgba(255,255,255,0.38), inset -1px -1px 0 rgba(0,0,0,0.12);"></div>
<span class="t" style="top:1037px;font-size:11px;color:#050505;left:926px;width:600px;text-align:center;-webkit-text-stroke:0.2px #050505;">Premult3</span>
<div style="left:1189px;top:1055px;width:7px;height:3px;background:#ff0000;"></div>
<div style="left:1196px;top:1055px;width:7px;height:3px;background:#00e400;"></div>
<div style="left:1203px;top:1055px;width:8px;height:3px;background:#0000ff;"></div>
<div style="left:1213px;top:1055px;width:2px;height:3px;background:#ffffff;"></div>
<div style="left:1186px;top:1117px;width:80px;height:32px;background:#1b1b1b;border-radius:1px;"></div>
<div style="left:1187px;top:1118px;width:78px;height:30px;background:linear-gradient(#c898cc,#8a628e);box-shadow:inset 1px 1px 0 rgba(255,255,255,0.38), inset -1px -1px 0 rgba(0,0,0,0.12);"></div>
<span class="t" style="top:1114px;font-size:11px;color:#050505;left:926px;width:600px;text-align:center;-webkit-text-stroke:0.2px #050505;">Reformat2</span>
<span class="t" style="top:1126px;font-size:11px;color:#050505;left:926px;width:600px;text-align:center;-webkit-text-stroke:0.2px #050505;">()</span>
<div style="left:1189px;top:1144px;width:7px;height:3px;background:#ff0000;"></div>
<div style="left:1196px;top:1144px;width:7px;height:3px;background:#00e400;"></div>
<div style="left:1203px;top:1144px;width:8px;height:3px;background:#0000ff;"></div>
<div style="left:1211px;top:1144px;width:8px;height:3px;background:#ffffff;"></div>
<div style="left:1186px;top:1169px;width:80px;height:20px;background:#1b1b1b;border-radius:1px;"></div>
<div style="left:1187px;top:1170px;width:78px;height:18px;background:linear-gradient(#c898cc,#8a628e);box-shadow:inset 1px 1px 0 rgba(255,255,255,0.38), inset -1px -1px 0 rgba(0,0,0,0.12);"></div>
<span class="t" style="top:1166px;font-size:11px;color:#050505;left:926px;width:600px;text-align:center;-webkit-text-stroke:0.2px #050505;">Transform2</span>
<div style="left:998px;top:1226px;width:80px;height:34px;background:#1b1b1b;border-radius:1px;"></div>
<div style="left:999px;top:1227px;width:78px;height:32px;background:linear-gradient(#33e033,#1e9a1e);box-shadow:inset 1px 1px 0 rgba(255,255,255,0.38), inset -1px -1px 0 rgba(0,0,0,0.12);"></div>
<span class="t" style="top:1224px;font-size:11px;color:#050505;left:739px;width:600px;text-align:center;">Keyer1 (luminance key)</span>
<span class="t" style="top:1236px;font-size:11px;color:#050505;left:739px;width:600px;text-align:center;">(alpha)</span>
<svg style="left:999px;top:1227px;" width="79" height="32" viewBox="0 0 79 32"><path d="M0,0 L79,32 M79,0 L0,32" stroke="#000" stroke-width="2"/></svg>
<svg style="left:768px;top:1000px;" width="84" height="19" viewBox="0 0 84 19"><defs><linearGradient id="vg" x1="0" y1="0" x2="0" y2="1"><stop offset="0" stop-color="#ececec"/><stop offset="1" stop-color="#9a9a9a"/></linearGradient></defs><path d="M5,0.5 H79 L83.5,9.5 L79,18.5 H5 L0.5,9.5 Z" fill="url(#vg)" stroke="#3a3a3a" stroke-width="0.8"/></svg>
<span class="t" style="top:996px;font-size:11px;color:#050505;left:510px;width:600px;text-align:center;">Viewer2</span>
<svg style="left:764px;top:1006px;" width="4" height="7" viewBox="0 0 4 7"><path d="M0,0 V7 L4,3.5 Z" fill="#0a0a0a"/></svg>
<span class="t" style="top:1016px;font-size:10px;color:#f2b75c;letter-spacing:0.2px;left:832px;">1</span>
<svg style="left:441px;top:1043px;" width="12" height="12" viewBox="0 0 12 12"><defs><radialGradient id="dg" cx="0.4" cy="0.35" r="0.7"><stop offset="0" stop-color="#e2e2e2"/><stop offset="1" stop-color="#969696"/></radialGradient></defs><circle cx="6" cy="6" r="5.2" fill="url(#dg)" stroke="#1a1a1a" stroke-width="0.8"/></svg>
<svg style="left:1033px;top:1306px;" width="12" height="12" viewBox="0 0 12 12"><defs><radialGradient id="dg" cx="0.4" cy="0.35" r="0.7"><stop offset="0" stop-color="#e2e2e2"/><stop offset="1" stop-color="#969696"/></radialGradient></defs><circle cx="6" cy="6" r="5.2" fill="url(#dg)" stroke="#1a1a1a" stroke-width="0.8"/></svg>
<svg style="left:482px;top:1137px;" width="10" height="10" viewBox="0 0 10 10"><circle cx="5" cy="5" r="3.7" fill="#c43a4c" stroke="#e7a0a8" stroke-width="0.8"/><path d="M3.5,6.8 L5,3 L6.5,6.8 M4,5.6 H6" stroke="#fff" stroke-width="0.85" fill="none"/></svg>
<svg style="left:482px;top:1173px;" width="10" height="10" viewBox="0 0 10 10"><circle cx="5" cy="5" r="3.7" fill="#c43a4c" stroke="#e7a0a8" stroke-width="0.8"/><path d="M3.5,6.8 L5,3 L6.5,6.8 M4,5.6 H6" stroke="#fff" stroke-width="0.85" fill="none"/></svg>
<svg style="left:1074px;top:1162px;" width="10" height="10" viewBox="0 0 10 10"><circle cx="5" cy="5" r="3.7" fill="#c43a4c" stroke="#e7a0a8" stroke-width="0.8"/><path d="M3.5,6.8 L5,3 L6.5,6.8 M4,5.6 H6" stroke="#fff" stroke-width="0.85" fill="none"/></svg>
<svg style="left:1262px;top:1164px;" width="10" height="10" viewBox="0 0 10 10"><circle cx="5" cy="5" r="3.7" fill="#c43a4c" stroke="#e7a0a8" stroke-width="0.8"/><path d="M3.5,6.8 L5,3 L6.5,6.8 M4,5.6 H6" stroke="#fff" stroke-width="0.85" fill="none"/></svg>
<span class="t" style="top:1109px;font-size:11px;color:#f2b75c;left:388px;">BgVecs</span>
<span class="t" style="top:1116px;font-size:11px;color:#f2b75c;left:406px;">FgVecs</span>
<span class="t" style="top:1104px;font-size:11px;color:#f2b75c;left:449px;">Matte</span>
<span class="t" style="top:1115px;font-size:11px;color:#f2b75c;left:443px;">Source</span>
<span class="t" style="top:1145px;font-size:11px;color:#f2b75c;left:388px;">BgVecs</span>
<span class="t" style="top:1152px;font-size:11px;color:#f2b75c;left:406px;">FgVecs</span>
<span class="t" style="top:1140px;font-size:11px;color:#f2b75c;left:449px;">Matte</span>
<span class="t" style="top:1204px;font-size:11px;color:#f2b75c;letter-spacing:0.2px;left:675px;">A</span>
<span class="t" style="top:1229px;font-size:11px;color:#f2b75c;letter-spacing:0.2px;left:621px;">B</span>
<span class="t" style="top:1275px;font-size:11px;color:#f2b75c;letter-spacing:0.2px;left:675px;">B</span>
<span class="t" style="top:1300px;font-size:11px;color:#f2b75c;letter-spacing:0.2px;left:730px;">A</span>
<span class="t" style="top:1345px;font-size:11px;color:#f2b75c;letter-spacing:0.2px;left:675px;">B</span>
<div style="left:56px;top:1309px;width:78px;height:70px;background:linear-gradient(#dcdcdc 0,#dcdcdc 45px,#c0c0c0 45px,#a0a0a0 70px);box-shadow:inset 1px 0 0 #f4f4f4;"></div>
<div style="left:58px;top:1310px;width:75px;height:43px;background:#000;"></div>
<span class="t" style="top:1351px;font-size:11px;color:#050505;letter-spacing:0.2px;left:-205px;width:600px;text-align:center;">Read15</span>
<div style="left:165px;top:1309px;width:79px;height:70px;background:linear-gradient(#dcdcdc 0,#dcdcdc 45px,#c0c0c0 45px,#a0a0a0 70px);box-shadow:inset 1px 0 0 #f4f4f4;"></div>
<div style="left:167px;top:1310px;width:76px;height:43px;background:#000;"></div>
<span class="t" style="top:1351px;font-size:11px;color:#050505;letter-spacing:0.2px;left:-96px;width:600px;text-align:center;">Read16</span>
<div style="left:278px;top:1309px;width:78px;height:70px;background:linear-gradient(#dcdcdc 0,#dcdcdc 45px,#c0c0c0 45px,#a0a0a0 70px);box-shadow:inset 1px 0 0 #f4f4f4;"></div>
<div style="left:280px;top:1310px;width:75px;height:43px;background:#000;"></div>
<span class="t" style="top:1351px;font-size:11px;color:#050505;letter-spacing:0.2px;left:17px;width:600px;text-align:center;">Read17</span>
<div style="left:72px;top:1318px;width:40px;height:30px;background:radial-gradient(ellipse at 45% 50%,rgba(46,48,50,0.6),rgba(0,0,0,0) 65%)"></div>
<svg style="left:1656px;top:1288px;" width="286" height="78" viewBox="0 0 286 78"><path d="M0.5,77 V0.5 H285" stroke="#dcdcdc" stroke-width="1.1" fill="none"/><rect x="0.7" y="0.7" width="4" height="4" stroke="#e6e6e6" stroke-width="1" fill="none"/><rect x="156" y="3" width="2" height="70" fill="#0c0c0c"/><rect x="146" y="14" width="12" height="1.5" fill="#0c0c0c"/><rect x="129" y="24" width="18" height="1.5" fill="#0c0c0c"/><rect x="129" y="24" width="1.5" height="8" fill="#0c0c0c"/><rect x="136" y="24" width="1.5" height="8" fill="#0c0c0c"/><rect x="128" y="35" width="30" height="2" fill="#0c0c0c"/><rect x="175" y="25" width="2" height="38" fill="#0c0c0c"/><rect x="185" y="25" width="2" height="43" fill="#0c0c0c"/><rect x="158" y="67" width="28" height="1.5" fill="#0c0c0c"/><rect x="145" y="47" width="14" height="1.2" fill="#0c0c0c"/><rect x="145" y="59" width="14" height="1.2" fill="#0c0c0c"/><rect x="146" y="47" width="1.2" height="12" fill="#0c0c0c"/><rect x="155" y="3" width="4" height="3" fill="#e0e0e0"/><rect x="155" y="8" width="4" height="2" fill="#d8d800"/><rect x="155" y="13" width="4" height="3" fill="#e0e0e0"/><rect x="142" y="14" width="4" height="3" fill="#e0e0e0"/><rect x="142" y="18" width="4" height="2" fill="#d8d800"/><rect x="142" y="23" width="4" height="3" fill="#e0e0e0"/><rect x="127" y="29" width="4" height="1" fill="#e0e0e0"/><rect x="134" y="29" width="4" height="1" fill="#e0e0e0"/><rect x="127" y="31" width="4" height="2" fill="#78d878"/><rect x="134" y="31" width="4" height="2" fill="#78d878"/><rect x="127" y="35" width="4" height="2" fill="#2e7a3a"/><rect x="134" y="35" width="4" height="1" fill="#4a5ed0"/><rect x="140" y="35" width="4" height="2" fill="#a86030"/><rect x="155" y="29" width="4" height="0.6" fill="#3a6ac0"/><rect x="155" y="36" width="4" height="4" fill="#6fd070"/><rect x="155" y="35" width="4" height="1" fill="#c04080"/><rect x="173" y="24" width="4" height="2" fill="#000"/><rect x="173" y="26" width="4" height="2" fill="#e0e0e0"/><rect x="183" y="24" width="4" height="4" fill="#d0d0d0"/><rect x="183" y="29" width="4" height="1" fill="#c8b040"/><rect x="173" y="32" width="4" height="1" fill="#e0e0e0"/><rect x="183" y="32" width="4" height="1" fill="#e0e0e0"/><rect x="155" y="42" width="4" height="1" fill="#7fa8f0"/><rect x="173" y="41" width="4" height="1" fill="#7fa8f0"/><rect x="183" y="41" width="4" height="1" fill="#7fa8f0"/><rect x="173" y="43" width="4" height="1" fill="#7fa8f0"/><rect x="183" y="43" width="4" height="1" fill="#7fa8f0"/><rect x="173" y="44.5" width="4" height="4" fill="#e8935a"/><rect x="183" y="44.5" width="4" height="4" fill="#e8935a"/><rect x="173" y="48.5" width="4" height="1" fill="#e0e0e0"/><rect x="183" y="49.5" width="4" height="1" fill="#e0e0e0"/><rect x="162" y="46" width="4" height="1" fill="#e0e0e0"/><rect x="155" y="48.5" width="4" height="1" fill="#e0e0e0"/><rect x="143" y="50" width="4" height="2" fill="#e8935a"/><rect x="143" y="54" width="4" height="2" fill="#e8935a"/><rect x="143" y="58" width="4" height="1" fill="#e8935a"/><rect x="173" y="52" width="4" height="2" fill="#c890cc"/><rect x="183" y="52" width="4" height="2" fill="#c890cc"/><rect x="173" y="55.5" width="4" height="1" fill="#c890cc"/><rect x="183" y="55.5" width="4" height="1" fill="#c890cc"/><rect x="173" y="58" width="4" height="2" fill="#22b022"/><rect x="155" y="58.5" width="4" height="1" fill="#5a6ee0"/><rect x="155" y="62.5" width="4" height="1" fill="#5a6ee0"/><rect x="155" y="66.5" width="4" height="1" fill="#5a6ee0"/><rect x="155" y="73" width="4" height="2" fill="#d8d800"/><rect x="103" y="44" width="4" height="4" fill="#d80000"/><rect x="98" y="62" width="4" height="4" fill="#d8d8d8"/><rect x="115" y="62" width="4" height="4" fill="#d8d8d8"/><rect x="120" y="62" width="4" height="2" fill="#000"/><rect x="120" y="64" width="4" height="2" fill="#e0e0e0"/><rect x="126.5" y="62" width="4" height="2" fill="#181818"/><rect x="126.5" y="64" width="4" height="1.6" fill="#d8d8d8"/><rect x="131.5" y="62" width="4" height="2" fill="#181818"/><rect x="131.5" y="64" width="4" height="1.6" fill="#d8d8d8"/><rect x="137" y="62" width="4" height="2" fill="#181818"/><rect x="137" y="64" width="4" height="1.6" fill="#d8d8d8"/><path d="M163,46.5 L172,54" stroke="#0c0c0c" stroke-width="1.3"/><rect x="174.6" y="62.6" width="1" height="1" fill="#e8e8e8"/><rect x="183.8" y="66.6" width="1" height="1" fill="#e8e8e8"/><rect x="126.3" y="41.2" width="95" height="24.4" fill="rgba(240,170,170,0.24)" stroke="#f2a9a9" stroke-width="1.2"/></svg>
</div></div>
<div style="left:1941px;top:52px;width:1px;height:1313px;background:#2c2c2c;"></div>
<div style="left:1942px;top:52px;width:1px;height:1313px;background:#000;"></div>
<div style="left:1943px;top:52px;width:1px;height:1313px;background:#484848;"></div>
<div style="left:1944px;top:52px;width:616px;height:1313px;background:#323232;"></div>
<div style="left:1944px;top:52px;width:616px;height:28px;background:#262626;"></div>
<div style="left:1947px;top:54px;width:16px;height:16px;background:#4e4e4e;"></div>
<div style="left:1947px;top:54px;width:8px;height:10px;background:#b2b2b2;"></div>
<div style="left:1947px;top:64px;width:8px;height:6px;background:#888888;"></div>
<div style="left:1955px;top:54px;width:1px;height:16px;background:#6e6e6e;"></div>
<div style="left:2079px;top:56px;width:172px;height:23px;background:#2c2c2c;border-radius:5px 5px 0 0;box-shadow:inset 1px 1px 0 #1c1c1c, inset -1px 0 0 #1c1c1c;"></div>
<div style="left:1967px;top:52px;width:112px;height:28px;background:#323232;border-radius:5px 5px 0 0;box-shadow:inset 1px 1px 0 #1c1c1c, inset -1px 0 0 #1c1c1c;"></div>
<span class="t" style="top:53px;font-size:11px;color:#d2d2d2;letter-spacing:0.2px;left:1982px;">Properties</span>
<svg style="left:2049px;top:58px;" width="16" height="16" viewBox="0 0 16 16"><circle cx="8" cy="8" r="7" fill="#383838"/><path d="M5,5 L11,11 M11,5 L5,11" stroke="#8a8a8a" stroke-width="2" fill="none"/></svg>
<span class="t" style="top:54px;font-size:11px;color:#d2d2d2;letter-spacing:0.2px;left:2094px;">Background Renders</span>
<svg style="left:2222px;top:59px;" width="16" height="16" viewBox="0 0 16 16"><circle cx="8" cy="8" r="7" fill="#3c3c3c"/><path d="M5,5 L11,11 M11,5 L5,11" stroke="#6e6e6e" stroke-width="2" fill="none"/></svg>
<div style="left:1949px;top:84px;width:22px;height:20px;background:#3b3b3b;border-radius:3px;box-shadow:inset 0 0 0 1px #222;"></div>
<span class="t" style="top:81px;font-size:11px;color:#d2d2d2;letter-spacing:0.2px;left:1660px;width:600px;text-align:center;">10</span>
<svg style="left:1976px;top:87px;" width="14" height="14" viewBox="0 0 14 14"><path d="M6.6,6.4 V3.6 C6.6,-0.2 12.6,0.2 12.4,4.2" stroke="#0c0c0c" stroke-width="1.7" fill="none"/><rect x="0.5" y="6" width="10.5" height="7.4" rx="1" fill="#0c0c0c"/><rect x="5.2" y="8.4" width="1.2" height="2.6" fill="#323232"/></svg>
<svg style="left:1995px;top:88px;" width="15" height="12" viewBox="0 0 15 12"><path d="M0.5,1.5 H8 M0.5,6 H6.6 M0.5,10.5 H8" stroke="#e6e6e6" stroke-width="2"/><path d="M6,1 L13.6,11 M13.6,1 L6,11" stroke="#f4f4f4" stroke-width="2.2"/><rect x="0" y="0" width="9.5" height="12" rx="1" stroke="#222" stroke-width="0.8" fill="none"/></svg>
<div style="left:2543px;top:125px;width:14px;height:1205px;background:#383838;border-radius:2px;box-shadow:inset 0 0 0 1px #282828;"></div>
<div style="left:2543px;top:109px;width:14px;height:14px;background:#3a3a3a;border-radius:3px;box-shadow:inset 0 0 0 1px #262626;"></div>
<svg style="left:2546px;top:113px;" width="8" height="5" viewBox="0 0 8 5"><path d="M0,5 H8 L4,0 Z" fill="#e8e8e8"/></svg>
<div style="left:2543px;top:1333px;width:14px;height:13px;background:#3a3a3a;border-radius:3px;box-shadow:inset 0 0 0 1px #262626;"></div>
<svg style="left:2546px;top:1336px;" width="8" height="5" viewBox="0 0 8 5"><path d="M0,5 H8 L4,0 Z" fill="#dcdcdc"/></svg>
<div style="left:2543px;top:1348px;width:14px;height:14px;background:#3a3a3a;border-radius:3px;box-shadow:inset 0 0 0 1px #262626;"></div>
<svg style="left:2546px;top:1352px;" width="8" height="5" viewBox="0 0 8 5"><path d="M0,0 H8 L4,5 Z" fill="#dcdcdc"/></svg>
<svg style="left:2545px;top:719px;" width="10" height="19" viewBox="0 0 10 19"><g fill="#4a4a4a"><rect x="0" y="0" width="1" height="1"/><rect x="0" y="3" width="1" height="1"/><rect x="0" y="6" width="1" height="1"/><rect x="0" y="9" width="1" height="1"/><rect x="0" y="12" width="1" height="1"/><rect x="0" y="15" width="1" height="1"/><rect x="0" y="18" width="1" height="1"/><rect x="3" y="0" width="1" height="1"/><rect x="3" y="3" width="1" height="1"/><rect x="3" y="6" width="1" height="1"/><rect x="3" y="9" width="1" height="1"/><rect x="3" y="12" width="1" height="1"/><rect x="3" y="15" width="1" height="1"/><rect x="3" y="18" width="1" height="1"/><rect x="6" y="0" width="1" height="1"/><rect x="6" y="3" width="1" height="1"/><rect x="6" y="6" width="1" height="1"/><rect x="6" y="9" width="1" height="1"/><rect x="6" y="12" width="1" height="1"/><rect x="6" y="15" width="1" height="1"/><rect x="6" y="18" width="1" height="1"/><rect x="9" y="0" width="1" height="1"/><rect x="9" y="3" width="1" height="1"/><rect x="9" y="6" width="1" height="1"/><rect x="9" y="9" width="1" height="1"/><rect x="9" y="12" width="1" height="1"/><rect x="9" y="15" width="1" height="1"/><rect x="9" y="18" width="1" height="1"/></g></svg>
<div style="left:1950px;top:110px;width:589px;height:2px;background:#b882bc;"></div>
<div style="left:1950px;top:112px;width:589px;height:23px;background:linear-gradient(#3c3c3c,#2f2f2f);box-shadow:inset 0 -1px 0 #242424, inset 1px 0 0 #2a2a2a;"></div>
<svg style="left:1956px;top:119px;" width="9" height="7" viewBox="0 0 9 7"><path d="M0,0 H9 L4.5,6.5 Z" fill="#0c0c0c"/></svg>
<div style="left:1974px;top:114px;width:69px;height:20px;background:#4a4a4a;border-radius:3px;box-shadow:inset 0 0 0 1px #272727;"></div>
<div style="left:1997px;top:115px;width:1px;height:18px;background:#2c2c2c;"></div>
<div style="left:2020px;top:115px;width:1px;height:18px;background:#2c2c2c;"></div>
<svg style="left:1980px;top:118px;" width="12" height="12" viewBox="0 0 12 12"><circle cx="6" cy="6" r="4.6" stroke="#0c0c0c" stroke-width="1.4" fill="none"/><circle cx="6" cy="6" r="1.7" fill="#0c0c0c"/></svg>
<svg style="left:2002px;top:117px;" width="14" height="14" viewBox="0 0 14 14"><rect x="0.5" y="5.6" width="12" height="4.6" rx="0.8" fill="#0c0c0c"/><path d="M3.4,1 L6.2,5.6 M9.8,1 L7,5.6" stroke="#0c0c0c" stroke-width="1"/><rect x="5.6" y="10.2" width="1.8" height="1.6" fill="#0c0c0c"/></svg>
<svg style="left:2025px;top:116px;" width="14" height="16" viewBox="0 0 14 16"><path d="M3.4,0.6 C0.6,2.6 0.8,6.6 3.8,8 V15 H8.2 V8 C11.2,6.6 11.4,2.6 8.6,0.6 V5 H3.4 Z" fill="#0c0c0c"/></svg>
<div style="left:2054px;top:114px;width:292px;height:20px;background:#3b3b3b;border-radius:3px;box-shadow:inset 0 0 0 1px #252525;"></div>
<span class="t" style="top:111px;font-size:11px;color:#d2d2d2;letter-spacing:0.2px;left:2057px;">Transform1</span>
<div style="left:2356px;top:114px;width:115px;height:20px;background:#4a4a4a;border-radius:3px;box-shadow:inset 0 0 0 1px #272727;"></div>
<div style="left:2379px;top:115px;width:1px;height:18px;background:#2c2c2c;"></div>
<div style="left:2402px;top:115px;width:1px;height:18px;background:#2c2c2c;"></div>
<div style="left:2425px;top:115px;width:1px;height:18px;background:#2c2c2c;"></div>
<div style="left:2448px;top:115px;width:1px;height:18px;background:#2c2c2c;"></div>
<svg style="left:2360px;top:118px;" width="11" height="11" viewBox="0 0 11 11"><rect x="0.5" y="0.5" width="10" height="10" fill="#b882bc" stroke="#0c0c0c"/><path d="M1,10 L10,1" stroke="#1a1a1a" stroke-width="1.2"/></svg>
<svg style="left:2383px;top:118px;" width="11" height="11" viewBox="0 0 11 11"><rect x="0.5" y="0.5" width="10" height="10" fill="#dedede" stroke="#0c0c0c"/><path d="M1,10 L10,1" stroke="#1a1a1a" stroke-width="1.2"/></svg>
<svg style="left:2406px;top:119px;" width="14" height="9" viewBox="0 0 14 9"><path d="M0.5,1.5 V8 H6.5 L4.4,5.8 C7,3.6 10.6,4 13.5,7.6 C11.6,2.4 6.4,0.8 2.6,4 Z" fill="#414141"/></svg>
<svg style="left:2429px;top:119px;" width="14" height="9" viewBox="0 0 14 9"><path d="M13.5,1.5 V8 H7.5 L9.6,5.8 C7,3.6 3.4,4 0.5,7.6 C2.4,2.4 7.6,0.8 11.4,4 Z" fill="#414141"/></svg>
<svg style="left:2453px;top:117px;" width="13" height="12" viewBox="0 0 13 12"><path d="M1.6,6.6 V3.4 Q1.6,1.2 3.8,1.2 H8.2 Q10.4,1.2 10.4,3.4 V7" stroke="#414141" stroke-width="1.8" fill="none"/><path d="M3.6,5.6 L7.4,5.6 L5.4,10.6 Z" fill="#414141" transform="translate(-3.9,0)"/></svg>
<span class="t" style="top:109px;font-size:14px;color:#0c0c0c;font-weight:bold;left:2486px;">?</span>
<svg style="left:2507px;top:119px;" width="9" height="9" viewBox="0 0 9 9"><rect x="3" y="0.8" width="5.2" height="3.6" stroke="#0c0c0c" stroke-width="1.5" fill="none"/><rect x="0.8" y="3.6" width="5.2" height="4.4" stroke="#0c0c0c" stroke-width="1.5" fill="#353535"/></svg>
<svg style="left:2525px;top:120px;" width="8" height="7" viewBox="0 0 8 7"><path d="M0.5,0.3 L7.5,6.7 M7.5,0.3 L0.5,6.7" stroke="#0c0c0c" stroke-width="1.6" fill="none"/></svg>
<div style="left:2038px;top:142px;width:58px;height:16px;background:#2a2a2a;border-radius:5px 5px 0 0;box-shadow:inset 1px 1px 0 #1c1c1c, inset -1px 0 0 #1c1c1c;"></div>
<div style="left:1950px;top:158px;width:589px;height:282px;background:#323232;border-radius:3px;box-shadow:inset 0 0 0 1px #242424, inset 1px 1px 0 1px #383838;"></div>
<div style="left:1950px;top:139px;width:88px;height:21px;background:#323232;border-radius:4px 4px 0 0;box-shadow:inset 1px 1px 0 #242424, inset -1px 0 0 #242424, inset 2px 2px 0 #383838;"></div>
<span class="t" style="top:135px;font-size:11px;color:#d2d2d2;letter-spacing:0.2px;left:1965px;">Transform</span>
<span class="t" style="top:136px;font-size:11px;color:#d2d2d2;letter-spacing:0.2px;left:2053px;">Node</span>
<svg style="left:2527px;top:428px;" width="11" height="11" viewBox="0 0 11 11"><path d="M10,1 L1,10 M10,4 L4,10 M10,7 L7,10" stroke="#555" stroke-width="1" stroke-dasharray="1 1" fill="none"/></svg>
<span class="t" style="top:165px;font-size:11px;color:#d2d2d2;letter-spacing:0.2px;right:523px;">translate</span>
<span class="t" style="top:187px;font-size:11px;color:#d2d2d2;letter-spacing:0.2px;right:523px;">rotate</span>
<span class="t" style="top:209px;font-size:11px;color:#d2d2d2;letter-spacing:0.2px;right:523px;">scale</span>
<span class="t" style="top:231px;font-size:11px;color:#d2d2d2;letter-spacing:0.2px;right:523px;">skew X</span>
<span class="t" style="top:253px;font-size:11px;color:#d2d2d2;letter-spacing:0.2px;right:523px;">skew Y</span>
<span class="t" style="top:275px;font-size:11px;color:#d2d2d2;letter-spacing:0.2px;right:523px;">skew order</span>
<span class="t" style="top:297px;font-size:11px;color:#d2d2d2;letter-spacing:0.2px;right:523px;">center</span>
<span class="t" style="top:339px;font-size:11px;color:#d2d2d2;letter-spacing:0.2px;right:523px;">filter</span>
<span class="t" style="top:361px;font-size:11px;color:#d2d2d2;letter-spacing:0.2px;right:523px;">motionblur</span>
<span class="t" style="top:383px;font-size:11px;color:#d2d2d2;letter-spacing:0.2px;right:523px;">shutter</span>
<span class="t" style="top:405px;font-size:11px;color:#d2d2d2;letter-spacing:0.2px;right:523px;">shutter offset</span>
<span class="t" style="top:165px;font-size:11px;color:#c0c0c0;letter-spacing:0.2px;left:2043px;">x</span>
<div style="left:2052px;top:169px;width:72px;height:19px;background:#5b7ca4;border-radius:3px;box-shadow:inset 0 0 0 1px #2a3a4c;"></div>
<div style="left:2052px;top:169px;width:72px;height:19px;overflow:hidden"><span class="t" style="left:4px;top:-4px;font-size:11px;letter-spacing:0.2px;color:#e4e4e4">-445.681640</span></div>
<span class="t" style="top:165px;font-size:11px;color:#c0c0c0;letter-spacing:0.2px;left:2127px;">y</span>
<div style="left:2135px;top:169px;width:72px;height:19px;background:#5b7ca4;border-radius:3px;box-shadow:inset 0 0 0 1px #2a3a4c;"></div>
<span class="t" style="top:165px;font-size:11px;color:#e4e4e4;letter-spacing:0.2px;left:2139px;">16.3085937</span>
<div style="left:2210px;top:169px;width:18px;height:18px;background:#4a4a4a;border-radius:2px;box-shadow:inset 0 0 0 1px #2a2a2a;"></div>
<svg style="left:2210px;top:169px;" width="18" height="18" viewBox="0 0 18 18"><path d="M3,13.5 C6,3 8.5,4 9.5,9 C10.5,13.5 13,13 15,4" stroke="#222" stroke-width="1.5" fill="none"/></svg>
<div style="left:2044px;top:191px;width:72px;height:19px;background:#3b3b3b;border-radius:3px;box-shadow:inset 0 0 0 1px #232323;"></div>
<span class="t" style="top:187px;font-size:11px;color:#d2d2d2;letter-spacing:0.2px;left:2048px;">180</span>
<svg style="left:2120px;top:190px;shape-rendering:crispEdges;" width="389" height="12" viewBox="0 0 389 12"><rect x="10" y="3" width="1" height="5" fill="#242424"/><rect x="20" y="3" width="1" height="5" fill="#242424"/><rect x="31" y="3" width="1" height="5" fill="#242424"/><rect x="42" y="3" width="1" height="5" fill="#242424"/><rect x="53" y="3" width="1" height="5" fill="#242424"/><rect x="63" y="3" width="1" height="5" fill="#242424"/><rect x="74" y="3" width="1" height="5" fill="#242424"/><rect x="85" y="3" width="1" height="5" fill="#242424"/><rect x="96" y="3" width="1" height="5" fill="#242424"/><rect x="106" y="3" width="1" height="5" fill="#242424"/><rect x="117" y="3" width="1" height="5" fill="#242424"/><rect x="128" y="3" width="1" height="5" fill="#242424"/><rect x="139" y="3" width="1" height="5" fill="#242424"/><rect x="149" y="3" width="1" height="5" fill="#242424"/><rect x="160" y="3" width="1" height="5" fill="#242424"/><rect x="171" y="3" width="1" height="5" fill="#242424"/><rect x="182" y="3" width="1" height="5" fill="#242424"/><rect x="192" y="3" width="1" height="5" fill="#242424"/><rect x="203" y="3" width="1" height="5" fill="#242424"/><rect x="214" y="3" width="1" height="5" fill="#242424"/><rect x="225" y="3" width="1" height="5" fill="#242424"/><rect x="235" y="3" width="1" height="5" fill="#242424"/><rect x="246" y="3" width="1" height="5" fill="#242424"/><rect x="257" y="3" width="1" height="5" fill="#242424"/><rect x="268" y="3" width="1" height="5" fill="#242424"/><rect x="278" y="3" width="1" height="5" fill="#242424"/><rect x="289" y="3" width="1" height="5" fill="#242424"/><rect x="300" y="3" width="1" height="5" fill="#242424"/><rect x="311" y="3" width="1" height="5" fill="#242424"/><rect x="321" y="3" width="1" height="5" fill="#242424"/><rect x="332" y="3" width="1" height="5" fill="#242424"/><rect x="343" y="3" width="1" height="5" fill="#242424"/><rect x="354" y="3" width="1" height="5" fill="#242424"/><rect x="364" y="3" width="1" height="5" fill="#242424"/><rect x="375" y="3" width="1" height="5" fill="#242424"/><rect x="-1" y="0" width="1" height="8" fill="#242424"/><rect x="85" y="0" width="1" height="8" fill="#242424"/><rect x="192" y="0" width="1" height="8" fill="#242424"/><rect x="300" y="0" width="1" height="8" fill="#242424"/><rect x="386" y="0" width="1" height="8" fill="#242424"/><rect x="0" y="8" width="388" height="1" fill="#050505"/><rect x="0" y="9" width="388" height="1" fill="#585858"/><rect x="0" y="10" width="388" height="1" fill="#050505"/></svg>
<span class="t" style="top:191px;font-size:10px;color:#080808;letter-spacing:0.65px;left:2120px;-webkit-text-stroke:0.3px #080808;">-180</span>
<span class="t" style="top:191px;font-size:10px;color:#080808;letter-spacing:0.65px;left:2152px;-webkit-text-stroke:0.3px #080808;">-150</span>
<span class="t" style="top:191px;font-size:10px;color:#080808;letter-spacing:0.65px;left:2206px;-webkit-text-stroke:0.3px #080808;">-100</span>
<span class="t" style="top:191px;font-size:10px;color:#080808;letter-spacing:0.65px;left:2260px;-webkit-text-stroke:0.3px #080808;">-50</span>
<span class="t" style="top:191px;font-size:10px;color:#080808;letter-spacing:0.65px;left:2314px;-webkit-text-stroke:0.3px #080808;">0</span>
<span class="t" style="top:191px;font-size:10px;color:#080808;letter-spacing:0.65px;left:2367px;-webkit-text-stroke:0.3px #080808;">50</span>
<span class="t" style="top:191px;font-size:10px;color:#080808;letter-spacing:0.65px;left:2421px;-webkit-text-stroke:0.3px #080808;">100</span>
<span class="t" style="top:191px;font-size:10px;color:#080808;letter-spacing:0.65px;left:2475px;-webkit-text-stroke:0.3px #080808;">150</span>
<span class="t" style="top:191px;font-size:10px;color:#080808;letter-spacing:0.65px;right:52px;-webkit-text-stroke:0.3px #080808;">180</span>
<div style="left:2504px;top:193px;width:5px;height:10px;background:#262626;border-radius:1px;"></div>
<div style="left:2505px;top:194px;width:3px;height:8px;background:#a08a42;"></div>
<div style="left:2506px;top:194px;width:1px;height:8px;background:#8e7a3a;"></div>
<div style="left:2510px;top:191px;width:18px;height:18px;background:#4a4a4a;border-radius:2px;box-shadow:inset 0 0 0 1px #2a2a2a;"></div>
<svg style="left:2510px;top:191px;" width="18" height="18" viewBox="0 0 18 18"><path d="M3,13.5 C6,3 8.5,4 9.5,9 C10.5,13.5 13,13 15,4" stroke="#222" stroke-width="1.5" fill="none"/></svg>
<div style="left:2044px;top:213px;width:72px;height:19px;background:#5b7ca4;border-radius:3px;box-shadow:inset 0 0 0 1px #2a3a4c;"></div>
<span class="t" style="top:209px;font-size:11px;color:#e4e4e4;letter-spacing:0.2px;left:2048px;">1</span>
<svg style="left:2120px;top:212px;shape-rendering:crispEdges;" width="369" height="12" viewBox="0 0 369 12"><rect x="54" y="3" width="1" height="5" fill="#242424"/><rect x="86" y="3" width="1" height="5" fill="#242424"/><rect x="109" y="3" width="1" height="5" fill="#242424"/><rect x="127" y="3" width="1" height="5" fill="#242424"/><rect x="142" y="3" width="1" height="5" fill="#242424"/><rect x="154" y="3" width="1" height="5" fill="#242424"/><rect x="165" y="3" width="1" height="5" fill="#242424"/><rect x="174" y="3" width="1" height="5" fill="#242424"/><rect x="238" y="3" width="1" height="5" fill="#242424"/><rect x="270" y="3" width="1" height="5" fill="#242424"/><rect x="293" y="3" width="1" height="5" fill="#242424"/><rect x="311" y="3" width="1" height="5" fill="#242424"/><rect x="326" y="3" width="1" height="5" fill="#242424"/><rect x="338" y="3" width="1" height="5" fill="#242424"/><rect x="349" y="3" width="1" height="5" fill="#242424"/><rect x="358" y="3" width="1" height="5" fill="#242424"/><rect x="-1" y="0" width="1" height="8" fill="#242424"/><rect x="183" y="0" width="1" height="8" fill="#242424"/><rect x="366" y="0" width="1" height="8" fill="#242424"/><rect x="0" y="8" width="368" height="1" fill="#050505"/><rect x="0" y="9" width="368" height="1" fill="#585858"/><rect x="0" y="10" width="368" height="1" fill="#050505"/></svg>
<span class="t" style="top:213px;font-size:10px;color:#080808;letter-spacing:0.65px;left:2120px;-webkit-text-stroke:0.3px #080808;">0.1</span>
<span class="t" style="top:213px;font-size:10px;color:#080808;letter-spacing:0.65px;left:2175px;-webkit-text-stroke:0.3px #080808;">0.2</span>
<span class="t" style="top:213px;font-size:10px;color:#080808;letter-spacing:0.65px;left:2208px;-webkit-text-stroke:0.3px #080808;">0.3</span>
<span class="t" style="top:213px;font-size:10px;color:#080808;letter-spacing:0.65px;left:2231px;-webkit-text-stroke:0.3px #080808;">0.4</span>
<span class="t" style="top:213px;font-size:10px;color:#080808;letter-spacing:0.65px;left:2263px;-webkit-text-stroke:0.3px #080808;">0.6</span>
<span class="t" style="top:213px;font-size:10px;color:#080808;letter-spacing:0.65px;left:2304px;-webkit-text-stroke:0.3px #080808;">1</span>
<span class="t" style="top:213px;font-size:10px;color:#080808;letter-spacing:0.65px;left:2359px;-webkit-text-stroke:0.3px #080808;">2</span>
<span class="t" style="top:213px;font-size:10px;color:#080808;letter-spacing:0.65px;left:2391px;-webkit-text-stroke:0.3px #080808;">3</span>
<span class="t" style="top:213px;font-size:10px;color:#080808;letter-spacing:0.65px;left:2414px;-webkit-text-stroke:0.3px #080808;">4</span>
<span class="t" style="top:213px;font-size:10px;color:#080808;letter-spacing:0.65px;left:2447px;-webkit-text-stroke:0.3px #080808;">6</span>
<span class="t" style="top:213px;font-size:10px;color:#080808;letter-spacing:0.65px;right:72px;-webkit-text-stroke:0.3px #080808;">10</span>
<div style="left:2301px;top:215px;width:5px;height:10px;background:#262626;border-radius:1px;"></div>
<div style="left:2302px;top:216px;width:3px;height:8px;background:#a08a42;"></div>
<div style="left:2303px;top:216px;width:1px;height:8px;background:#8e7a3a;"></div>
<div style="left:2490px;top:213px;width:18px;height:19px;background:#4a4a4a;border-radius:2px;box-shadow:inset 0 0 0 1px #2a2a2a;"></div>
<span class="t" style="top:209px;font-size:11px;color:#d2d2d2;letter-spacing:0.2px;left:2199px;width:600px;text-align:center;">2</span>
<div style="left:2510px;top:213px;width:18px;height:18px;background:#4a4a4a;border-radius:2px;box-shadow:inset 0 0 0 1px #2a2a2a;"></div>
<svg style="left:2510px;top:213px;" width="18" height="18" viewBox="0 0 18 18"><path d="M3,13.5 C6,3 8.5,4 9.5,9 C10.5,13.5 13,13 15,4" stroke="#222" stroke-width="1.5" fill="none"/></svg>
<div style="left:2044px;top:235px;width:72px;height:19px;background:#3b3b3b;border-radius:3px;box-shadow:inset 0 0 0 1px #232323;"></div>
<span class="t" style="top:231px;font-size:11px;color:#d2d2d2;letter-spacing:0.2px;left:2048px;">0</span>
<svg style="left:2120px;top:234px;shape-rendering:crispEdges;" width="389" height="12" viewBox="0 0 389 12"><rect x="18" y="3" width="1" height="5" fill="#242424"/><rect x="38" y="3" width="1" height="5" fill="#242424"/><rect x="57" y="3" width="1" height="5" fill="#242424"/><rect x="76" y="3" width="1" height="5" fill="#242424"/><rect x="96" y="3" width="1" height="5" fill="#242424"/><rect x="115" y="3" width="1" height="5" fill="#242424"/><rect x="134" y="3" width="1" height="5" fill="#242424"/><rect x="154" y="3" width="1" height="5" fill="#242424"/><rect x="173" y="3" width="1" height="5" fill="#242424"/><rect x="192" y="3" width="1" height="5" fill="#242424"/><rect x="212" y="3" width="1" height="5" fill="#242424"/><rect x="231" y="3" width="1" height="5" fill="#242424"/><rect x="250" y="3" width="1" height="5" fill="#242424"/><rect x="270" y="3" width="1" height="5" fill="#242424"/><rect x="289" y="3" width="1" height="5" fill="#242424"/><rect x="308" y="3" width="1" height="5" fill="#242424"/><rect x="328" y="3" width="1" height="5" fill="#242424"/><rect x="347" y="3" width="1" height="5" fill="#242424"/><rect x="366" y="3" width="1" height="5" fill="#242424"/><rect x="-1" y="0" width="1" height="8" fill="#242424"/><rect x="192" y="0" width="1" height="8" fill="#242424"/><rect x="386" y="0" width="1" height="8" fill="#242424"/><rect x="0" y="8" width="388" height="1" fill="#050505"/><rect x="0" y="9" width="388" height="1" fill="#585858"/><rect x="0" y="10" width="388" height="1" fill="#050505"/></svg>
<span class="t" style="top:235px;font-size:10px;color:#080808;letter-spacing:0.65px;left:2120px;-webkit-text-stroke:0.3px #080808;">-1</span>
<span class="t" style="top:235px;font-size:10px;color:#080808;letter-spacing:0.65px;left:2159px;-webkit-text-stroke:0.3px #080808;">-0.8</span>
<span class="t" style="top:235px;font-size:10px;color:#080808;letter-spacing:0.65px;left:2197px;-webkit-text-stroke:0.3px #080808;">-0.6</span>
<span class="t" style="top:235px;font-size:10px;color:#080808;letter-spacing:0.65px;left:2236px;-webkit-text-stroke:0.3px #080808;">-0.4</span>
<span class="t" style="top:235px;font-size:10px;color:#080808;letter-spacing:0.65px;left:2275px;-webkit-text-stroke:0.3px #080808;">-0.2</span>
<span class="t" style="top:235px;font-size:10px;color:#080808;letter-spacing:0.65px;left:2314px;-webkit-text-stroke:0.3px #080808;">0</span>
<span class="t" style="top:235px;font-size:10px;color:#080808;letter-spacing:0.65px;left:2352px;-webkit-text-stroke:0.3px #080808;">0.2</span>
<span class="t" style="top:235px;font-size:10px;color:#080808;letter-spacing:0.65px;left:2391px;-webkit-text-stroke:0.3px #080808;">0.4</span>
<span class="t" style="top:235px;font-size:10px;color:#080808;letter-spacing:0.65px;left:2430px;-webkit-text-stroke:0.3px #080808;">0.6</span>
<span class="t" style="top:235px;font-size:10px;color:#080808;letter-spacing:0.65px;left:2468px;-webkit-text-stroke:0.3px #080808;">0.8</span>
<span class="t" style="top:235px;font-size:10px;color:#080808;letter-spacing:0.65px;right:52px;-webkit-text-stroke:0.3px #080808;">1</span>
<div style="left:2311px;top:237px;width:5px;height:10px;background:#262626;border-radius:1px;"></div>
<div style="left:2312px;top:238px;width:3px;height:8px;background:#a08a42;"></div>
<div style="left:2313px;top:238px;width:1px;height:8px;background:#8e7a3a;"></div>
<div style="left:2510px;top:235px;width:18px;height:18px;background:#4a4a4a;border-radius:2px;box-shadow:inset 0 0 0 1px #2a2a2a;"></div>
<svg style="left:2510px;top:235px;" width="18" height="18" viewBox="0 0 18 18"><path d="M3,13.5 C6,3 8.5,4 9.5,9 C10.5,13.5 13,13 15,4" stroke="#222" stroke-width="1.5" fill="none"/></svg>
<div style="left:2044px;top:257px;width:72px;height:19px;background:#3b3b3b;border-radius:3px;box-shadow:inset 0 0 0 1px #232323;"></div>
<span class="t" style="top:253px;font-size:11px;color:#d2d2d2;letter-spacing:0.2px;left:2048px;">0</span>
<svg style="left:2120px;top:256px;shape-rendering:crispEdges;" width="389" height="12" viewBox="0 0 389 12"><rect x="18" y="3" width="1" height="5" fill="#242424"/><rect x="38" y="3" width="1" height="5" fill="#242424"/><rect x="57" y="3" width="1" height="5" fill="#242424"/><rect x="76" y="3" width="1" height="5" fill="#242424"/><rect x="96" y="3" width="1" height="5" fill="#242424"/><rect x="115" y="3" width="1" height="5" fill="#242424"/><rect x="134" y="3" width="1" height="5" fill="#242424"/><rect x="154" y="3" width="1" height="5" fill="#242424"/><rect x="173" y="3" width="1" height="5" fill="#242424"/><rect x="192" y="3" width="1" height="5" fill="#242424"/><rect x="212" y="3" width="1" height="5" fill="#242424"/><rect x="231" y="3" width="1" height="5" fill="#242424"/><rect x="250" y="3" width="1" height="5" fill="#242424"/><rect x="270" y="3" width="1" height="5" fill="#242424"/><rect x="289" y="3" width="1" height="5" fill="#242424"/><rect x="308" y="3" width="1" height="5" fill="#242424"/><rect x="328" y="3" width="1" height="5" fill="#242424"/><rect x="347" y="3" width="1" height="5" fill="#242424"/><rect x="366" y="3" width="1" height="5" fill="#242424"/><rect x="-1" y="0" width="1" height="8" fill="#242424"/><rect x="192" y="0" width="1" height="8" fill="#242424"/><rect x="386" y="0" width="1" height="8" fill="#242424"/><rect x="0" y="8" width="388" height="1" fill="#050505"/><rect x="0" y="9" width="388" height="1" fill="#585858"/><rect x="0" y="10" width="388" height="1" fill="#050505"/></svg>
<span class="t" style="top:257px;font-size:10px;color:#080808;letter-spacing:0.65px;left:2120px;-webkit-text-stroke:0.3px #080808;">-1</span>
<span class="t" style="top:257px;font-size:10px;color:#080808;letter-spacing:0.65px;left:2159px;-webkit-text-stroke:0.3px #080808;">-0.8</span>
<span class="t" style="top:257px;font-size:10px;color:#080808;letter-spacing:0.65px;left:2197px;-webkit-text-stroke:0.3px #080808;">-0.6</span>
<span class="t" style="top:257px;font-size:10px;color:#080808;letter-spacing:0.65px;left:2236px;-webkit-text-stroke:0.3px #080808;">-0.4</span>
<span class="t" style="top:257px;font-size:10px;color:#080808;letter-spacing:0.65px;left:2275px;-webkit-text-stroke:0.3px #080808;">-0.2</span>
<span class="t" style="top:257px;font-size:10px;color:#080808;letter-spacing:0.65px;left:2314px;-webkit-text-stroke:0.3px #080808;">0</span>
<span class="t" style="top:257px;font-size:10px;color:#080808;letter-spacing:0.65px;left:2352px;-webkit-text-stroke:0.3px #080808;">0.2</span>
<span class="t" style="top:257px;font-size:10px;color:#080808;letter-spacing:0.65px;left:2391px;-webkit-text-stroke:0.3px #080808;">0.4</span>
<span class="t" style="top:257px;font-size:10px;color:#080808;letter-spacing:0.65px;left:2430px;-webkit-text-stroke:0.3px #080808;">0.6</span>
<span class="t" style="top:257px;font-size:10px;color:#080808;letter-spacing:0.65px;left:2468px;-webkit-text-stroke:0.3px #080808;">0.8</span>
<span class="t" style="top:257px;font-size:10px;color:#080808;letter-spacing:0.65px;right:52px;-webkit-text-stroke:0.3px #080808;">1</span>
<div style="left:2311px;top:259px;width:5px;height:10px;background:#262626;border-radius:1px;"></div>
<div style="left:2312px;top:260px;width:3px;height:8px;background:#a08a42;"></div>
<div style="left:2313px;top:260px;width:1px;height:8px;background:#8e7a3a;"></div>
<div style="left:2510px;top:257px;width:18px;height:18px;background:#4a4a4a;border-radius:2px;box-shadow:inset 0 0 0 1px #2a2a2a;"></div>
<svg style="left:2510px;top:257px;" width="18" height="18" viewBox="0 0 18 18"><path d="M3,13.5 C6,3 8.5,4 9.5,9 C10.5,13.5 13,13 15,4" stroke="#222" stroke-width="1.5" fill="none"/></svg>
<div style="left:2043px;top:278px;width:45px;height:20px;background:linear-gradient(#4c4c4c,#3c3c3c);border-radius:4px;box-shadow:inset 0 0 0 1px #202020, inset 0 0 0 2px rgba(32,32,32,0.35);"></div>
<span class="t" style="top:275px;font-size:11px;color:#d2d2d2;letter-spacing:0.2px;left:2048px;">XY</span>
<svg style="left:2077px;top:286px;" width="6" height="4" viewBox="0 0 6 4"><path d="M0,0 H6 L3.0,4 Z" fill="#d4d4d4"/></svg>
<span class="t" style="top:297px;font-size:11px;color:#c0c0c0;letter-spacing:0.2px;left:2043px;">x</span>
<div style="left:2052px;top:300px;width:72px;height:19px;background:#3b3b3b;border-radius:3px;box-shadow:inset 0 0 0 1px #232323;"></div>
<span class="t" style="top:297px;font-size:11px;color:#d2d2d2;letter-spacing:0.2px;left:2056px;">1024</span>
<span class="t" style="top:297px;font-size:11px;color:#c0c0c0;letter-spacing:0.2px;left:2127px;">y</span>
<div style="left:2135px;top:300px;width:72px;height:19px;background:#3b3b3b;border-radius:3px;box-shadow:inset 0 0 0 1px #232323;"></div>
<span class="t" style="top:297px;font-size:11px;color:#d2d2d2;letter-spacing:0.2px;left:2139px;">576</span>
<div style="left:2210px;top:300px;width:18px;height:18px;background:#4a4a4a;border-radius:2px;box-shadow:inset 0 0 0 1px #2a2a2a;"></div>
<svg style="left:2210px;top:300px;" width="18" height="18" viewBox="0 0 18 18"><path d="M3,13.5 C6,3 8.5,4 9.5,9 C10.5,13.5 13,13 15,4" stroke="#222" stroke-width="1.5" fill="none"/></svg>
<div style="left:2043px;top:323px;width:16px;height:16px;background:#3a3a3a;border-radius:2px;box-shadow:inset 0 0 0 1px #2a2a2a;"></div>
<span class="t" style="top:318px;font-size:11px;color:#d2d2d2;letter-spacing:0.2px;left:2065px;">invert</span>
<div style="left:2043px;top:342px;width:81px;height:20px;background:linear-gradient(#4c4c4c,#3c3c3c);border-radius:4px;box-shadow:inset 0 0 0 1px #202020, inset 0 0 0 2px rgba(32,32,32,0.35);"></div>
<span class="t" style="top:339px;font-size:11px;color:#d2d2d2;letter-spacing:0.2px;left:2048px;">Cubic</span>
<svg style="left:2112px;top:350px;" width="6" height="4" viewBox="0 0 6 4"><path d="M0,0 H6 L3.0,4 Z" fill="#d4d4d4"/></svg>
<div style="left:2126px;top:343px;width:16px;height:16px;background:#3a3a3a;border-radius:2px;box-shadow:inset 0 0 0 1px #2a2a2a;"></div>
<span class="t" style="top:339px;font-size:11px;color:#d2d2d2;letter-spacing:0.2px;left:2148px;">clamp</span>
<div style="left:2189px;top:343px;width:16px;height:16px;background:#3a3a3a;border-radius:2px;box-shadow:inset 0 0 0 1px #2a2a2a;"></div>
<svg style="left:2190px;top:344px;" width="15" height="15" viewBox="0 0 15 15"><path d="M2.8,2.8 L11.4,11.4 M11.4,2.8 L2.8,11.4" stroke="#dedede" stroke-width="2.4" stroke-linecap="round" fill="none"/></svg>
<span class="t" style="top:339px;font-size:11px;color:#d2d2d2;letter-spacing:0.2px;left:2212px;">black outside</span>
<div style="left:2044px;top:365px;width:72px;height:19px;background:#3b3b3b;border-radius:3px;box-shadow:inset 0 0 0 1px #232323;"></div>
<span class="t" style="top:361px;font-size:11px;color:#d2d2d2;letter-spacing:0.2px;left:2048px;">0</span>
<svg style="left:2120px;top:364px;shape-rendering:crispEdges;" width="389" height="12" viewBox="0 0 389 12"><rect x="18" y="3" width="1" height="5" fill="#242424"/><rect x="26" y="3" width="1" height="5" fill="#242424"/><rect x="32" y="3" width="1" height="5" fill="#242424"/><rect x="38" y="3" width="1" height="5" fill="#242424"/><rect x="42" y="3" width="1" height="5" fill="#242424"/><rect x="46" y="3" width="1" height="5" fill="#242424"/><rect x="50" y="3" width="1" height="5" fill="#242424"/><rect x="54" y="3" width="1" height="5" fill="#242424"/><rect x="57" y="3" width="1" height="5" fill="#242424"/><rect x="60" y="3" width="1" height="5" fill="#242424"/><rect x="85" y="3" width="1" height="5" fill="#242424"/><rect x="105" y="3" width="1" height="5" fill="#242424"/><rect x="121" y="3" width="1" height="5" fill="#242424"/><rect x="136" y="3" width="1" height="5" fill="#242424"/><rect x="149" y="3" width="1" height="5" fill="#242424"/><rect x="161" y="3" width="1" height="5" fill="#242424"/><rect x="172" y="3" width="1" height="5" fill="#242424"/><rect x="182" y="3" width="1" height="5" fill="#242424"/><rect x="-1" y="0" width="1" height="8" fill="#242424"/><rect x="192" y="0" width="1" height="8" fill="#242424"/><rect x="272" y="0" width="1" height="8" fill="#242424"/><rect x="334" y="0" width="1" height="8" fill="#242424"/><rect x="386" y="0" width="1" height="8" fill="#242424"/><rect x="0" y="8" width="388" height="1" fill="#050505"/><rect x="0" y="9" width="388" height="1" fill="#585858"/><rect x="0" y="10" width="388" height="1" fill="#050505"/></svg>
<span class="t" style="top:365px;font-size:10px;color:#080808;letter-spacing:0.65px;left:2120px;-webkit-text-stroke:0.3px #080808;">0</span>
<span class="t" style="top:365px;font-size:10px;color:#080808;letter-spacing:0.65px;left:2181px;-webkit-text-stroke:0.3px #080808;">0.1</span>
<span class="t" style="top:365px;font-size:10px;color:#080808;letter-spacing:0.65px;left:2242px;-webkit-text-stroke:0.3px #080808;">0.4</span>
<span class="t" style="top:365px;font-size:10px;color:#080808;letter-spacing:0.65px;left:2282px;-webkit-text-stroke:0.3px #080808;">0.7</span>
<span class="t" style="top:365px;font-size:10px;color:#080808;letter-spacing:0.65px;left:2314px;-webkit-text-stroke:0.3px #080808;">1</span>
<span class="t" style="top:365px;font-size:10px;color:#080808;letter-spacing:0.65px;left:2394px;-webkit-text-stroke:0.3px #080808;">2</span>
<span class="t" style="top:365px;font-size:10px;color:#080808;letter-spacing:0.65px;left:2455px;-webkit-text-stroke:0.3px #080808;">3</span>
<span class="t" style="top:365px;font-size:10px;color:#080808;letter-spacing:0.65px;right:52px;-webkit-text-stroke:0.3px #080808;">4</span>
<div style="left:2117px;top:367px;width:5px;height:10px;background:#262626;border-radius:1px;"></div>
<div style="left:2118px;top:368px;width:3px;height:8px;background:#a08a42;"></div>
<div style="left:2119px;top:368px;width:1px;height:8px;background:#8e7a3a;"></div>
<div style="left:2510px;top:365px;width:18px;height:18px;background:#4a4a4a;border-radius:2px;box-shadow:inset 0 0 0 1px #2a2a2a;"></div>
<svg style="left:2510px;top:365px;" width="18" height="18" viewBox="0 0 18 18"><path d="M3,13.5 C6,3 8.5,4 9.5,9 C10.5,13.5 13,13 15,4" stroke="#222" stroke-width="1.5" fill="none"/></svg>
<div style="left:2044px;top:387px;width:72px;height:19px;background:#3b3b3b;border-radius:3px;box-shadow:inset 0 0 0 1px #232323;"></div>
<span class="t" style="top:383px;font-size:11px;color:#d2d2d2;letter-spacing:0.2px;left:2048px;">0.5</span>
<svg style="left:2120px;top:386px;shape-rendering:crispEdges;" width="389" height="12" viewBox="0 0 389 12"><rect x="18" y="3" width="1" height="5" fill="#242424"/><rect x="38" y="3" width="1" height="5" fill="#242424"/><rect x="57" y="3" width="1" height="5" fill="#242424"/><rect x="76" y="3" width="1" height="5" fill="#242424"/><rect x="96" y="3" width="1" height="5" fill="#242424"/><rect x="115" y="3" width="1" height="5" fill="#242424"/><rect x="134" y="3" width="1" height="5" fill="#242424"/><rect x="154" y="3" width="1" height="5" fill="#242424"/><rect x="173" y="3" width="1" height="5" fill="#242424"/><rect x="192" y="3" width="1" height="5" fill="#242424"/><rect x="212" y="3" width="1" height="5" fill="#242424"/><rect x="231" y="3" width="1" height="5" fill="#242424"/><rect x="250" y="3" width="1" height="5" fill="#242424"/><rect x="270" y="3" width="1" height="5" fill="#242424"/><rect x="289" y="3" width="1" height="5" fill="#242424"/><rect x="308" y="3" width="1" height="5" fill="#242424"/><rect x="328" y="3" width="1" height="5" fill="#242424"/><rect x="347" y="3" width="1" height="5" fill="#242424"/><rect x="366" y="3" width="1" height="5" fill="#242424"/><rect x="-1" y="0" width="1" height="8" fill="#242424"/><rect x="192" y="0" width="1" height="8" fill="#242424"/><rect x="386" y="0" width="1" height="8" fill="#242424"/><rect x="0" y="8" width="388" height="1" fill="#050505"/><rect x="0" y="9" width="388" height="1" fill="#585858"/><rect x="0" y="10" width="388" height="1" fill="#050505"/></svg>
<span class="t" style="top:387px;font-size:10px;color:#080808;letter-spacing:0.65px;left:2120px;-webkit-text-stroke:0.3px #080808;">0</span>
<span class="t" style="top:387px;font-size:10px;color:#080808;letter-spacing:0.65px;left:2159px;-webkit-text-stroke:0.3px #080808;">0.2</span>
<span class="t" style="top:387px;font-size:10px;color:#080808;letter-spacing:0.65px;left:2197px;-webkit-text-stroke:0.3px #080808;">0.4</span>
<span class="t" style="top:387px;font-size:10px;color:#080808;letter-spacing:0.65px;left:2236px;-webkit-text-stroke:0.3px #080808;">0.6</span>
<span class="t" style="top:387px;font-size:10px;color:#080808;letter-spacing:0.65px;left:2275px;-webkit-text-stroke:0.3px #080808;">0.8</span>
<span class="t" style="top:387px;font-size:10px;color:#080808;letter-spacing:0.65px;left:2314px;-webkit-text-stroke:0.3px #080808;">1</span>
<span class="t" style="top:387px;font-size:10px;color:#080808;letter-spacing:0.65px;left:2352px;-webkit-text-stroke:0.3px #080808;">1.2</span>
<span class="t" style="top:387px;font-size:10px;color:#080808;letter-spacing:0.65px;left:2391px;-webkit-text-stroke:0.3px #080808;">1.4</span>
<span class="t" style="top:387px;font-size:10px;color:#080808;letter-spacing:0.65px;left:2430px;-webkit-text-stroke:0.3px #080808;">1.6</span>
<span class="t" style="top:387px;font-size:10px;color:#080808;letter-spacing:0.65px;left:2468px;-webkit-text-stroke:0.3px #080808;">1.8</span>
<span class="t" style="top:387px;font-size:10px;color:#080808;letter-spacing:0.65px;right:52px;-webkit-text-stroke:0.3px #080808;">2</span>
<div style="left:2214px;top:389px;width:5px;height:10px;background:#262626;border-radius:1px;"></div>
<div style="left:2215px;top:390px;width:3px;height:8px;background:#a08a42;"></div>
<div style="left:2216px;top:390px;width:1px;height:8px;background:#8e7a3a;"></div>
<div style="left:2510px;top:387px;width:18px;height:18px;background:#4a4a4a;border-radius:2px;box-shadow:inset 0 0 0 1px #2a2a2a;"></div>
<svg style="left:2510px;top:387px;" width="18" height="18" viewBox="0 0 18 18"><path d="M3,13.5 C6,3 8.5,4 9.5,9 C10.5,13.5 13,13 15,4" stroke="#222" stroke-width="1.5" fill="none"/></svg>
<div style="left:2043px;top:408px;width:72px;height:20px;background:linear-gradient(#4c4c4c,#3c3c3c);border-radius:4px;box-shadow:inset 0 0 0 1px #202020, inset 0 0 0 2px rgba(32,32,32,0.35);"></div>
<span class="t" style="top:405px;font-size:11px;color:#d2d2d2;letter-spacing:0.2px;left:2048px;">start</span>
<svg style="left:2103px;top:416px;" width="6" height="4" viewBox="0 0 6 4"><path d="M0,0 H6 L3.0,4 Z" fill="#d4d4d4"/></svg>
<div style="left:2118px;top:409px;width:72px;height:19px;background:#3b3b3b;border-radius:3px;box-shadow:inset 0 0 0 1px #232323;"></div>
<span class="t" style="top:405px;font-size:11px;color:#6a6a6a;letter-spacing:0.2px;left:2122px;">0</span>
<svg style="left:2194px;top:408px;shape-rendering:crispEdges;" width="315" height="12" viewBox="0 0 315 12"><rect x="14" y="3" width="1" height="5" fill="#242424"/><rect x="30" y="3" width="1" height="5" fill="#242424"/><rect x="46" y="3" width="1" height="5" fill="#242424"/><rect x="61" y="3" width="1" height="5" fill="#242424"/><rect x="77" y="3" width="1" height="5" fill="#242424"/><rect x="93" y="3" width="1" height="5" fill="#242424"/><rect x="108" y="3" width="1" height="5" fill="#242424"/><rect x="124" y="3" width="1" height="5" fill="#242424"/><rect x="140" y="3" width="1" height="5" fill="#242424"/><rect x="155" y="3" width="1" height="5" fill="#242424"/><rect x="171" y="3" width="1" height="5" fill="#242424"/><rect x="187" y="3" width="1" height="5" fill="#242424"/><rect x="202" y="3" width="1" height="5" fill="#242424"/><rect x="218" y="3" width="1" height="5" fill="#242424"/><rect x="234" y="3" width="1" height="5" fill="#242424"/><rect x="249" y="3" width="1" height="5" fill="#242424"/><rect x="265" y="3" width="1" height="5" fill="#242424"/><rect x="280" y="3" width="1" height="5" fill="#242424"/><rect x="296" y="3" width="1" height="5" fill="#242424"/><rect x="-1" y="0" width="1" height="8" fill="#242424"/><rect x="155" y="0" width="1" height="8" fill="#242424"/><rect x="312" y="0" width="1" height="8" fill="#242424"/><rect x="0" y="8" width="314" height="1" fill="#050505"/><rect x="0" y="9" width="314" height="1" fill="#585858"/><rect x="0" y="10" width="314" height="1" fill="#050505"/></svg>
<span class="t" style="top:409px;font-size:10px;color:#080808;letter-spacing:0.65px;left:2194px;-webkit-text-stroke:0.3px #080808;">-1</span>
<span class="t" style="top:409px;font-size:10px;color:#080808;letter-spacing:0.65px;left:2225px;-webkit-text-stroke:0.3px #080808;">-0.8</span>
<span class="t" style="top:409px;font-size:10px;color:#080808;letter-spacing:0.65px;left:2257px;-webkit-text-stroke:0.3px #080808;">-0.6</span>
<span class="t" style="top:409px;font-size:10px;color:#080808;letter-spacing:0.65px;left:2288px;-webkit-text-stroke:0.3px #080808;">-0.4</span>
<span class="t" style="top:409px;font-size:10px;color:#080808;letter-spacing:0.65px;left:2319px;-webkit-text-stroke:0.3px #080808;">-0.2</span>
<span class="t" style="top:409px;font-size:10px;color:#080808;letter-spacing:0.65px;left:2350px;-webkit-text-stroke:0.3px #080808;">0</span>
<span class="t" style="top:409px;font-size:10px;color:#080808;letter-spacing:0.65px;left:2382px;-webkit-text-stroke:0.3px #080808;">0.2</span>
<span class="t" style="top:409px;font-size:10px;color:#080808;letter-spacing:0.65px;left:2413px;-webkit-text-stroke:0.3px #080808;">0.4</span>
<span class="t" style="top:409px;font-size:10px;color:#080808;letter-spacing:0.65px;left:2444px;-webkit-text-stroke:0.3px #080808;">0.6</span>
<span class="t" style="top:409px;font-size:10px;color:#080808;letter-spacing:0.65px;left:2476px;-webkit-text-stroke:0.3px #080808;">0.8</span>
<span class="t" style="top:409px;font-size:10px;color:#080808;letter-spacing:0.65px;right:52px;-webkit-text-stroke:0.3px #080808;">1</span>
<div style="left:2348px;top:411px;width:5px;height:10px;background:#262626;border-radius:1px;"></div>
<div style="left:2349px;top:412px;width:3px;height:8px;background:#a08a42;"></div>
<div style="left:2350px;top:412px;width:1px;height:8px;background:#8e7a3a;"></div>
<div style="left:2510px;top:409px;width:18px;height:18px;background:#4a4a4a;border-radius:2px;box-shadow:inset 0 0 0 1px #2a2a2a;"></div>
<div style="left:1950px;top:446px;width:589px;height:2px;background:#b882bc;"></div>
<div style="left:1950px;top:448px;width:589px;height:23px;background:linear-gradient(#3c3c3c,#2f2f2f);box-shadow:inset 0 -1px 0 #242424, inset 1px 0 0 #2a2a2a;"></div>
<svg style="left:1956px;top:455px;" width="9" height="7" viewBox="0 0 9 7"><path d="M0,0 H9 L4.5,6.5 Z" fill="#0c0c0c"/></svg>
<div style="left:1974px;top:450px;width:69px;height:20px;background:#4a4a4a;border-radius:3px;box-shadow:inset 0 0 0 1px #272727;"></div>
<div style="left:1997px;top:451px;width:1px;height:18px;background:#2c2c2c;"></div>
<div style="left:2020px;top:451px;width:1px;height:18px;background:#2c2c2c;"></div>
<svg style="left:1980px;top:454px;" width="12" height="12" viewBox="0 0 12 12"><circle cx="6" cy="6" r="4.6" stroke="#0c0c0c" stroke-width="1.4" fill="none"/><circle cx="6" cy="6" r="1.7" fill="#0c0c0c"/></svg>
<svg style="left:2002px;top:453px;" width="14" height="14" viewBox="0 0 14 14"><rect x="0.5" y="5.6" width="12" height="4.6" rx="0.8" fill="#0c0c0c"/><path d="M3.4,1 L6.2,5.6 M9.8,1 L7,5.6" stroke="#0c0c0c" stroke-width="1"/><rect x="5.6" y="10.2" width="1.8" height="1.6" fill="#0c0c0c"/></svg>
<svg style="left:2025px;top:452px;" width="14" height="16" viewBox="0 0 14 16"><path d="M3.4,0.6 C0.6,2.6 0.8,6.6 3.8,8 V15 H8.2 V8 C11.2,6.6 11.4,2.6 8.6,0.6 V5 H3.4 Z" fill="#0c0c0c"/></svg>
<div style="left:2054px;top:450px;width:292px;height:20px;background:#3b3b3b;border-radius:3px;box-shadow:inset 0 0 0 1px #252525;"></div>
<span class="t" style="top:447px;font-size:11px;color:#d2d2d2;letter-spacing:0.2px;left:2057px;">Reformat1</span>
<div style="left:2356px;top:450px;width:115px;height:20px;background:#4a4a4a;border-radius:3px;box-shadow:inset 0 0 0 1px #272727;"></div>
<div style="left:2379px;top:451px;width:1px;height:18px;background:#2c2c2c;"></div>
<div style="left:2402px;top:451px;width:1px;height:18px;background:#2c2c2c;"></div>
<div style="left:2425px;top:451px;width:1px;height:18px;background:#2c2c2c;"></div>
<div style="left:2448px;top:451px;width:1px;height:18px;background:#2c2c2c;"></div>
<svg style="left:2360px;top:454px;" width="11" height="11" viewBox="0 0 11 11"><rect x="0.5" y="0.5" width="10" height="10" fill="#b882bc" stroke="#0c0c0c"/><path d="M1,10 L10,1" stroke="#1a1a1a" stroke-width="1.2"/></svg>
<svg style="left:2383px;top:454px;" width="11" height="11" viewBox="0 0 11 11"><rect x="0.5" y="0.5" width="10" height="10" fill="#dedede" stroke="#0c0c0c"/><path d="M1,10 L10,1" stroke="#1a1a1a" stroke-width="1.2"/></svg>
<svg style="left:2406px;top:455px;" width="14" height="9" viewBox="0 0 14 9"><path d="M0.5,1.5 V8 H6.5 L4.4,5.8 C7,3.6 10.6,4 13.5,7.6 C11.6,2.4 6.4,0.8 2.6,4 Z" fill="#414141"/></svg>
<svg style="left:2429px;top:455px;" width="14" height="9" viewBox="0 0 14 9"><path d="M13.5,1.5 V8 H7.5 L9.6,5.8 C7,3.6 3.4,4 0.5,7.6 C2.4,2.4 7.6,0.8 11.4,4 Z" fill="#414141"/></svg>
<svg style="left:2453px;top:453px;" width="13" height="12" viewBox="0 0 13 12"><path d="M1.6,6.6 V3.4 Q1.6,1.2 3.8,1.2 H8.2 Q10.4,1.2 10.4,3.4 V7" stroke="#414141" stroke-width="1.8" fill="none"/><path d="M3.6,5.6 L7.4,5.6 L5.4,10.6 Z" fill="#414141" transform="translate(-3.9,0)"/></svg>
<span class="t" style="top:445px;font-size:14px;color:#0c0c0c;font-weight:bold;left:2486px;">?</span>
<svg style="left:2507px;top:455px;" width="9" height="9" viewBox="0 0 9 9"><rect x="3" y="0.8" width="5.2" height="3.6" stroke="#0c0c0c" stroke-width="1.5" fill="none"/><rect x="0.8" y="3.6" width="5.2" height="4.4" stroke="#0c0c0c" stroke-width="1.5" fill="#353535"/></svg>
<svg style="left:2525px;top:456px;" width="8" height="7" viewBox="0 0 8 7"><path d="M0.5,0.3 L7.5,6.7 M7.5,0.3 L0.5,6.7" stroke="#0c0c0c" stroke-width="1.6" fill="none"/></svg>
<div style="left:2032px;top:478px;width:59px;height:16px;background:#2a2a2a;border-radius:5px 5px 0 0;box-shadow:inset 1px 1px 0 #1c1c1c, inset -1px 0 0 #1c1c1c;"></div>
<div style="left:1950px;top:494px;width:589px;height:164px;background:#323232;border-radius:3px;box-shadow:inset 0 0 0 1px #242424, inset 1px 1px 0 1px #383838;"></div>
<div style="left:1950px;top:475px;width:82px;height:21px;background:#323232;border-radius:4px 4px 0 0;box-shadow:inset 1px 1px 0 #242424, inset -1px 0 0 #242424, inset 2px 2px 0 #383838;"></div>
<span class="t" style="top:471px;font-size:11px;color:#d2d2d2;letter-spacing:0.2px;left:1965px;">Reformat</span>
<span class="t" style="top:472px;font-size:11px;color:#d2d2d2;letter-spacing:0.2px;left:2048px;">Node</span>
<svg style="left:2527px;top:646px;" width="11" height="11" viewBox="0 0 11 11"><path d="M10,1 L1,10 M10,4 L4,10 M10,7 L7,10" stroke="#555" stroke-width="1" stroke-dasharray="1 1" fill="none"/></svg>
<span class="t" style="top:500px;font-size:11px;color:#d2d2d2;letter-spacing:0.2px;right:522px;">type</span>
<div style="left:2045px;top:504px;width:83px;height:20px;background:linear-gradient(#4c4c4c,#3c3c3c);border-radius:4px;box-shadow:inset 0 0 0 1px #202020, inset 0 0 0 2px rgba(32,32,32,0.35);"></div>
<span class="t" style="top:500px;font-size:11px;color:#d2d2d2;letter-spacing:0.2px;left:2050px;">to format</span>
<svg style="left:2117px;top:512px;" width="6" height="4" viewBox="0 0 6 4"><path d="M0,0 H6 L3.0,4 Z" fill="#d4d4d4"/></svg>
<span class="t" style="top:522px;font-size:11px;color:#d2d2d2;letter-spacing:0.2px;right:522px;">output format</span>
<div style="left:2045px;top:526px;width:89px;height:20px;background:linear-gradient(#4c4c4c,#3c3c3c);border-radius:4px;box-shadow:inset 0 0 0 1px #202020, inset 0 0 0 2px rgba(32,32,32,0.35);"></div>
<span class="t" style="top:522px;font-size:11px;color:#d2d2d2;letter-spacing:0.2px;left:2054px;">2048x1152</span>
<svg style="left:2119px;top:534px;" width="6" height="4" viewBox="0 0 6 4"><path d="M0,0 H6 L3.0,4 Z" fill="#d4d4d4"/></svg>
<div style="left:2135px;top:528px;width:18px;height:16px;background:#3e3e3e;border-radius:3px;box-shadow:inset 0 0 0 1px #242424;"></div>
<span class="t" style="top:522px;font-size:10px;color:#d2d2d2;letter-spacing:0.2px;left:1844px;width:600px;text-align:center;">=</span>
<div style="left:1961px;top:562px;width:567px;height:1px;background:#484848;"></div>
<div style="left:1961px;top:561px;width:567px;height:1px;background:#262626;"></div>
<span class="t" style="top:570px;font-size:11px;color:#d2d2d2;letter-spacing:0.2px;right:522px;">resize type</span>
<div style="left:2045px;top:573px;width:66px;height:21px;background:linear-gradient(#4c4c4c,#3c3c3c);border-radius:4px;box-shadow:inset 0 0 0 1px #202020, inset 0 0 0 2px rgba(32,32,32,0.35);"></div>
<span class="t" style="top:570px;font-size:11px;color:#d2d2d2;letter-spacing:0.2px;left:2050px;">width</span>
<svg style="left:2099px;top:581px;" width="6" height="4" viewBox="0 0 6 4"><path d="M0,0 H6 L3.0,4 Z" fill="#d4d4d4"/></svg>
<div style="left:2112px;top:575px;width:16px;height:16px;background:#3a3a3a;border-radius:2px;box-shadow:inset 0 0 0 1px #2a2a2a;"></div>
<svg style="left:2113px;top:576px;" width="15" height="15" viewBox="0 0 15 15"><path d="M2.8,2.8 L11.4,11.4 M11.4,2.8 L2.8,11.4" stroke="#dedede" stroke-width="2.4" stroke-linecap="round" fill="none"/></svg>
<span class="t" style="top:570px;font-size:11px;color:#d2d2d2;letter-spacing:0.2px;left:2135px;">center</span>
<div style="left:2179px;top:575px;width:16px;height:16px;background:#3a3a3a;border-radius:2px;box-shadow:inset 0 0 0 1px #2a2a2a;"></div>
<span class="t" style="top:570px;font-size:11px;color:#d2d2d2;letter-spacing:0.2px;left:2201px;">flip</span>
<div style="left:2226px;top:575px;width:16px;height:16px;background:#3a3a3a;border-radius:2px;box-shadow:inset 0 0 0 1px #2a2a2a;"></div>
<span class="t" style="top:570px;font-size:11px;color:#d2d2d2;letter-spacing:0.2px;left:2248px;">flop</span>
<div style="left:2277px;top:575px;width:16px;height:16px;background:#3a3a3a;border-radius:2px;box-shadow:inset 0 0 0 1px #2a2a2a;"></div>
<span class="t" style="top:570px;font-size:11px;color:#d2d2d2;letter-spacing:0.2px;left:2299px;">turn</span>
<span class="t" style="top:592px;font-size:11px;color:#d2d2d2;letter-spacing:0.2px;right:522px;">filter</span>
<div style="left:2045px;top:595px;width:81px;height:21px;background:linear-gradient(#4c4c4c,#3c3c3c);border-radius:4px;box-shadow:inset 0 0 0 1px #202020, inset 0 0 0 2px rgba(32,32,32,0.35);"></div>
<span class="t" style="top:592px;font-size:11px;color:#d2d2d2;letter-spacing:0.2px;left:2050px;">Cubic</span>
<svg style="left:2114px;top:603px;" width="6" height="4" viewBox="0 0 6 4"><path d="M0,0 H6 L3.0,4 Z" fill="#d4d4d4"/></svg>
<div style="left:2128px;top:597px;width:16px;height:16px;background:#3a3a3a;border-radius:2px;box-shadow:inset 0 0 0 1px #2a2a2a;"></div>
<span class="t" style="top:592px;font-size:11px;color:#d2d2d2;letter-spacing:0.2px;left:2150px;">clamp</span>
<div style="left:2192px;top:597px;width:16px;height:16px;background:#3a3a3a;border-radius:2px;box-shadow:inset 0 0 0 1px #2a2a2a;"></div>
<span class="t" style="top:592px;font-size:11px;color:#d2d2d2;letter-spacing:0.2px;left:2214px;">black outside</span>
<div style="left:2297px;top:597px;width:16px;height:16px;background:#3a3a3a;border-radius:2px;box-shadow:inset 0 0 0 1px #2a2a2a;"></div>
<span class="t" style="top:592px;font-size:11px;color:#d2d2d2;letter-spacing:0.2px;left:2319px;">preserve bounding box</span>
<div style="left:0px;top:1365px;width:2560px;height:25px;background:#323232;"></div>
<span class="t" style="top:1364px;font-size:18px;color:#cfcfcf;right:31px;">Memory: 1.7 GB (10.9%) CPU: 4.6% Disk: 0.0 MB/s Network: 0.0 MB/s</span>
<div style="left:2534px;top:1374px;width:24px;height:9px;background:#33b34a;border-radius:2px;"></div>
<span class="t" style="top:1365px;font-size:7px;color:#1e7a2e;left:2246px;width:600px;text-align:center;">OK</span>
<div style="left:0px;top:1390px;width:2560px;height:50px;background:#030509;"></div>
<div style="left:370px;top:1390px;width:56px;height:50px;background:#33363b;"></div>
<div style="left:426px;top:1390px;width:5px;height:50px;background:#1d1f23;"></div>
<div style="left:189px;top:1437px;width:40px;height:3px;background:#76b9ed;"></div>
<div style="left:229px;top:1437px;width:11px;height:3px;background:#5a8bb4;"></div>
<div style="left:251px;top:1437px;width:40px;height:3px;background:#76b9ed;"></div>
<div style="left:291px;top:1437px;width:10px;height:3px;background:#5a8bb4;"></div>
<div style="left:313px;top:1437px;width:50px;height:3px;background:#76b9ed;"></div>
<div style="left:370px;top:1437px;width:56px;height:3px;background:#76b9ed;"></div>
<div style="left:426px;top:1437px;width:5px;height:3px;background:#5a8bb4;"></div>
<svg style="left:19px;top:1404px;" width="22" height="22" viewBox="0 0 22 22"><path d="M1,3.8 L9.6,2.6 V10.4 H1 Z M10.8,2.4 L21.4,0.9 V10.4 H10.8 Z M1,11.6 H9.6 V19.4 L1,18.2 Z M10.8,11.6 H21.4 V21.1 L10.8,19.6 Z" fill="#fff"/></svg>
<svg style="left:78px;top:1402px;" width="26" height="26" viewBox="0 0 26 26"><circle cx="15" cy="10.2" r="6.8" stroke="#fff" stroke-width="1.4" fill="none"/><path d="M10.4,15.4 L2.6,23" stroke="#fff" stroke-width="1.6"/></svg>
<svg style="left:136px;top:1404px;" width="28" height="22" viewBox="0 0 28 22"><rect x="6.5" y="2.5" width="15" height="17" stroke="#fff" stroke-width="1.3" fill="none"/><path d="M4.5,5.5 H2.5 V16.5 H4.5 M23.5,5.5 H25.5 V16.5 H23.5" stroke="#fff" stroke-width="1.2" fill="none"/></svg>
<svg style="left:199px;top:1402px;" width="30" height="26" viewBox="0 0 30 26"><path d="M1,3 Q1,1 3,1 H11 L13.5,3.5 H27 Q28.5,3.5 28.5,5 V23 H1 Z" fill="#f5cf62"/><rect x="1" y="5.5" width="27.5" height="17.5" fill="#fce497"/><rect x="3" y="2.3" width="6" height="1.6" fill="#5fb6ea"/><path d="M5.5,23.8 V15 Q5.5,13 7.5,13 H21.5 Q23.5,13 23.5,15 V23.8 H19.5 V17.5 H9.5 V23.8 Z" fill="#3fa9e6"/></svg>
<svg style="left:262px;top:1400px;" width="28" height="30" viewBox="0 0 28 30"><path d="M1.5,14 C2.5,6 8,1.2 14.5,1.2 C22,1.2 26.5,6.5 26.5,13.5 V16.8 H9.8 C10,21 13.5,23.3 17.5,23.3 C20.5,23.3 23.3,22.4 25.6,21 V26.4 C23,27.9 19.9,28.8 16.5,28.8 C8.5,28.8 3.6,23.8 3.6,17 C3.6,12.6 6,9.2 9.4,7.4 C6,8.2 3.2,10.6 1.5,14 Z M9.9,12.1 H19.6 C19.5,8.8 17.8,6.6 14.8,6.6 C12,6.6 10.3,8.9 9.9,12.1 Z" fill="#1a7ad4"/></svg>
<svg style="left:323px;top:1399px;" width="30" height="31" viewBox="0 0 30 31"><path d="M15,1.5 Q17,1.5 17.6,3.5 L24.4,23 H5.6 L12.4,3.5 Q13,1.5 15,1.5 Z" fill="#f78a0a"/><path d="M11.6,6.5 H18.4 L19.9,11 H10.1 Z" fill="#f3f3f3"/><path d="M8.6,15.5 H21.4 L22.9,20 H7.1 Z" fill="#eaeaea"/><path d="M3.5,22.5 H26.5 L28.8,28.6 Q29,29.6 28,29.6 H2 Q1,29.6 1.2,28.6 Z" fill="#f08306"/><path d="M3.5,22.5 H26.5 L27.2,24.4 H2.8 Z" fill="#fba63a"/></svg>
<svg style="left:385px;top:1400px;" width="30" height="30" viewBox="0 0 30 30"><circle cx="15" cy="15" r="14.10" fill="#262626" stroke="#fcb731" stroke-width="1.80"/><path d="M2.85,12.15 A11.85,11.85 0 0 1 10.50,3.38 C12.30,4.20 12.90,7.20 14.70,7.65 C16.20,8.25 17.25,8.40 17.55,7.50 L18.45,3.00 A11.85,11.85 0 0 1 26.85,11.25 L22.35,12.22 Q21.30,14.25 22.95,16.50 L17.25,21.00 Q17.55,18.30 13.72,14.10 Q12.60,12.60 10.95,12.15 Z" fill="#fcb731"/><ellipse cx="17.85" cy="11.55" rx="1.95" ry="1.12" transform="rotate(40 17.85 11.55)" fill="#262626"/><circle cx="23.77" cy="24.30" r="5.15" fill="#262626" stroke="#fcb731" stroke-width="1.52"/><path d="M21.67,21.49 L25.88,27.11 M25.88,21.49 L21.67,27.11" stroke="#fcb731" stroke-width="1.17" fill="none"/></svg>
<svg style="left:1986px;top:1403px;" width="26" height="24" viewBox="0 0 26 24"><circle cx="15.5" cy="6.5" r="3.6" stroke="#fff" stroke-width="1.3" fill="none"/><path d="M9.6,16.5 C10,12 21,12 21.4,16.5" stroke="#fff" stroke-width="1.3" fill="none"/><circle cx="7.5" cy="12.5" r="3" stroke="#fff" stroke-width="1.3" fill="#030509"/><path d="M2,22 C2.5,16.5 12.5,16.5 13,22" stroke="#fff" stroke-width="1.3" fill="none"/></svg>
<svg style="left:2033px;top:1404px;" width="18" height="21" viewBox="0 0 18 21"><path d="M9,0.8 Q10,0.8 10.4,2 L14.4,14.5 H3.6 L7.6,2 Q8,0.8 9,0.8 Z" fill="#f78a0a"/><path d="M7,4.2 H11 L11.9,7 H6.1 Z" fill="#f1f1f1"/><path d="M5.2,9.8 H12.8 L13.7,12.6 H4.3 Z" fill="#e8e8e8"/><path d="M2,14.2 H16 L17.4,19 Q17.5,19.8 16.8,19.8 H1.2 Q0.5,19.8 0.6,19 Z" fill="#f08306"/></svg>
<svg style="left:2064px;top:1404px;" width="20" height="24" viewBox="0 0 20 24"><rect x="3.5" y="1.5" width="7" height="5" stroke="#fff" stroke-width="1.1" fill="none"/><rect x="5.3" y="3.2" width="1.2" height="1.4" fill="#fff"/><rect x="7.6" y="3.2" width="1.2" height="1.4" fill="#fff"/><path d="M2.5,6.5 H11.5 V18 Q11.5,20.5 9,20.5 H5 Q2.5,20.5 2.5,18 Z" stroke="#fff" stroke-width="1.2" fill="none"/><path d="M12.5,18.5 L15,21.5 L19,15.5" stroke="#cfcfcf" stroke-width="1" fill="none"/></svg>
<svg style="left:2091px;top:1407px;" width="22" height="16" viewBox="0 0 22 16"><path d="M5,14.5 C1.5,14.5 0.5,10.5 3.6,9.3 C3.2,5.6 8,4.2 9.6,6.8 C11,3.2 16.6,4.2 16.4,8.2 C21.5,8 22,14.5 17.6,14.5 Z" fill="#8e9094"/><path d="M7,14.5 C9,10 15,9 18,11.2" stroke="#6a6c70" stroke-width="1" fill="none"/></svg>
<svg style="left:2122px;top:1404px;" width="22" height="22" viewBox="0 0 22 22"><circle cx="11" cy="11" r="10.4" fill="#3ba7e0"/><path d="M6.2,11.4 L14.6,6.8 M6.2,11.4 L15.4,15.2" stroke="#fff" stroke-width="1.3"/><circle cx="6.2" cy="11.4" r="2.2" fill="#fff"/><circle cx="14.8" cy="6.8" r="2" fill="#fff"/><circle cx="15.4" cy="15.2" r="2" fill="#fff"/></svg>
<svg style="left:2153px;top:1405px;" width="20" height="19" viewBox="0 0 20 19"><path d="M1,16.5 L8.6,1.2 H12 L5.4,16.5 Z" fill="#7db332"/><path d="M8.6,1.2 H12 L18.8,17.2 H14.8 Z" fill="#1d8fd6"/><path d="M3.2,16.6 L6.8,10.4 L11.6,12.2 L9.6,13.2 L6.8,12.4 L5.4,16.6 Z" fill="#0d6aa8"/></svg>
<svg style="left:2181px;top:1404px;" width="22" height="22" viewBox="0 0 22 22"><rect x="1" y="1" width="20" height="19.5" fill="#e9f1fb" stroke="#2a6fc9" stroke-width="1.6"/><path d="M0.5,21.5 L4,18" stroke="#2a6fc9" stroke-width="1.5"/></svg>
<span class="w" style="top:1401px;font-size:15px;color:#2a6fc9;font-weight:bold;left:1892px;width:600px;text-align:center;">A</span>
<svg style="left:2211px;top:1403px;" width="24" height="24" viewBox="0 0 24 24"><ellipse cx="7.5" cy="7" rx="5.4" ry="3.8" transform="rotate(42 7.5 7)" fill="#3c4046"/><path d="M3.6,8.6 L10.8,2.4 L21.6,13.6 Q20.8,21.4 10.6,20.4 Z" fill="#b4b8be"/><path d="M5,8.4 L10.6,3.6 L14,7.2 Z" fill="#dfe2e6"/><ellipse cx="15.4" cy="16.4" rx="7" ry="4.2" transform="rotate(42 15.4 16.4)" fill="#1f2227" stroke="#c9ccd1" stroke-width="1"/><ellipse cx="15" cy="16.8" rx="3" ry="1.8" transform="rotate(42 15 16.8)" fill="#5a5e64"/></svg>
<svg style="left:2242px;top:1403px;" width="22" height="24" viewBox="0 0 22 24"><path d="M10,1.2 C12.5,3 15.2,3.8 18.6,4 V11 C18.6,16.2 14.8,19.6 10,21.6 C5.2,19.6 1.4,16.2 1.4,11 V4 C4.8,3.8 7.5,3 10,1.2 Z" fill="#fff"/><path d="M10,1.2 V21.6 M1.4,10.6 H18.6" stroke="#030509" stroke-width="1.1"/><circle cx="16.2" cy="18.4" r="5" fill="#1f9d45"/><path d="M13.7,18.5 L15.6,20.3 L18.8,16.6" stroke="#fff" stroke-width="1.3" fill="none"/></svg>
<svg style="left:2272px;top:1404px;" width="22" height="22" viewBox="0 0 22 22"><rect x="0.5" y="0.5" width="21" height="20" fill="#2b2e33"/><path d="M3.5,10.5 C6,6.6 11,6 14.5,8 C12,7.6 8.6,8.6 7.2,10.6 C8.6,12.6 11.4,13.4 13.6,12.6 C11.6,15 6,15 3.5,10.5 Z" fill="#7db500"/><path d="M8.5,6.4 V5.2 C14,4.6 18.6,8 19.4,10.6 C18,14 13.4,16.4 8.5,15.8 V14.6 C12.4,14.6 15.6,12.8 16.8,10.6 C15.4,8.2 12.6,6.2 8.5,6.4 Z" fill="#7db500"/></svg>
<svg style="left:2303px;top:1403px;" width="18" height="25" viewBox="0 0 18 25"><ellipse cx="9" cy="12.2" rx="8" ry="11.4" fill="#1683f0"/><path d="M5,8 L13,16.2 L9,19.8 V4.6 L13,8.2 L5,16.4" stroke="#fff" stroke-width="1.3" fill="none"/></svg>
<svg style="left:2332px;top:1405px;" width="18" height="18" viewBox="0 0 18 18"><path d="M3.5,2 H16.5 V11.5 L11.5,16.5 H3.5 L1,14.2 L3.5,12 Z" fill="#8cc540"/><rect x="6.4" y="4.6" width="6.4" height="6" fill="#0b1f10"/><path d="M1,14.2 L3.5,16.5 H11.5 L16.5,11.5 L14.2,12.6 L10.6,14.4 H3.5 Z" fill="#5a9a28"/></svg>
<svg style="left:2361px;top:1405px;" width="24" height="20" viewBox="0 0 24 20"><rect x="5.5" y="1.5" width="16" height="12" stroke="#fff" stroke-width="1.3" fill="#030509"/><path d="M13.5,13.5 V17.5 M9,17.8 H18" stroke="#fff" stroke-width="1.3"/><rect x="1.5" y="3.5" width="4" height="5" stroke="#fff" stroke-width="1" fill="#030509"/><rect x="2.6" y="4.5" width="1.8" height="1.2" fill="#fff"/></svg>
<svg style="left:2392px;top:1404px;" width="24" height="22" viewBox="0 0 24 22"><path d="M1.5,8 H4.8 L9.2,3.6 V19 L4.8,14.6 H1.5 Z" stroke="#fff" stroke-width="1.2" fill="none"/><path d="M12.2,8.6 Q13.8,11.3 12.2,14" stroke="#fff" stroke-width="1.1" fill="none"/><path d="M14.8,6.4 Q18,11.3 14.8,16.2" stroke="#fff" stroke-width="1.1" fill="none"/><path d="M17.6,4 Q22.6,11.3 17.6,18.6" stroke="#fff" stroke-width="1.1" fill="none"/></svg>
<span class="w" style="top:1401px;font-size:14px;color:#fff;letter-spacing:-0.2px;left:2426px;">ENG</span>
<span class="w" style="top:1389px;font-size:15px;color:#fff;letter-spacing:-0.5px;left:2208px;width:600px;text-align:center;">19:47</span>
<span class="w" style="top:1412px;font-size:15px;color:#fff;letter-spacing:0.2px;left:2208px;width:600px;text-align:center;">13/03/2019</span>
<div style="left:2554px;top:1390px;width:1px;height:50px;background:#5a5d62;"></div>
</div></body></html>
